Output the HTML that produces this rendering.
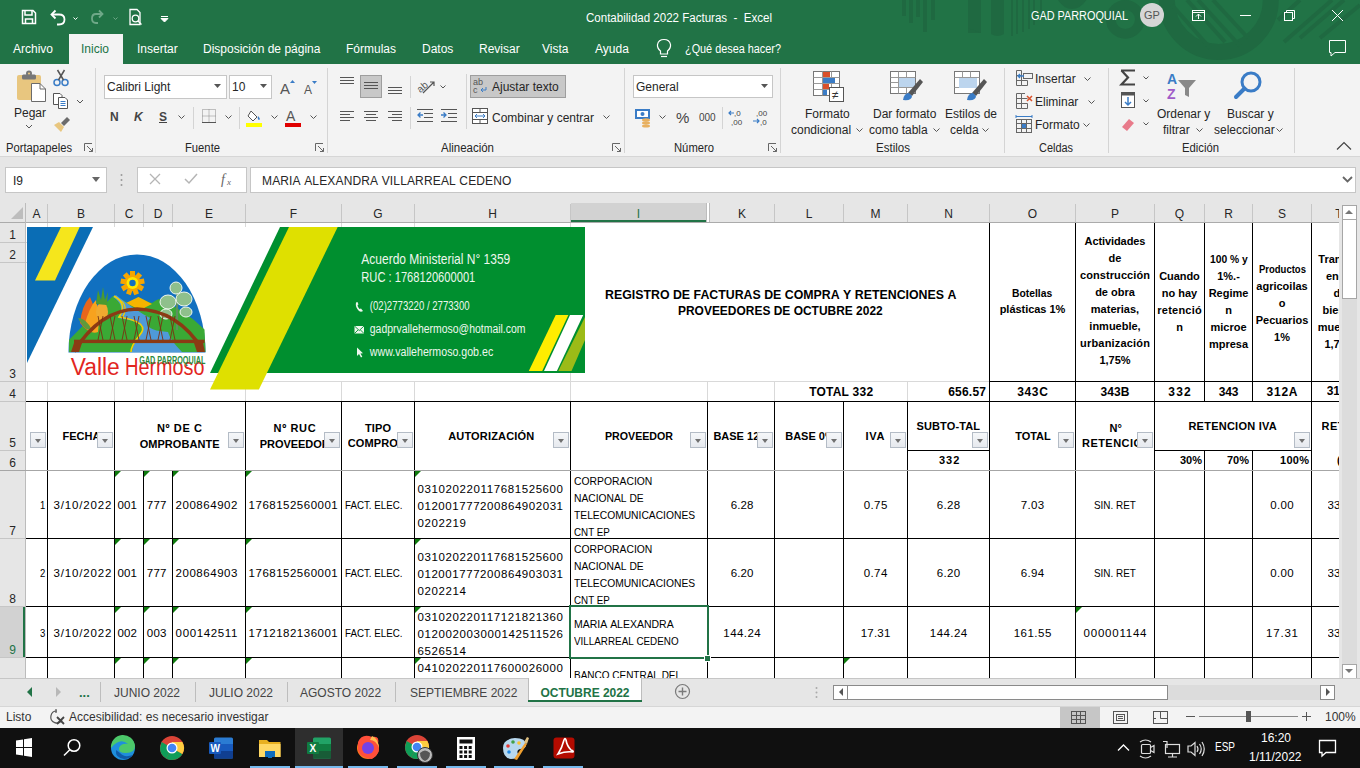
<!DOCTYPE html><html><head><meta charset="utf-8"><style>*{margin:0;padding:0;box-sizing:content-box}
html,body{width:1360px;height:768px;overflow:hidden;background:#fff;font-family:"Liberation Sans", sans-serif}
.t{position:absolute;white-space:nowrap;}
.r{position:absolute;}
.s{position:absolute;overflow:visible}
.fb{position:absolute;width:14px;height:14px;border:1px solid #b4bcc6;background:linear-gradient(#f5f7f9,#e6e9ee);}
.fb:after{content:"";position:absolute;left:4px;top:6px;border-left:3.5px solid transparent;border-right:3.5px solid transparent;border-top:4.5px solid #707070;}
</style></head><body><div class="r" style="left:0px;top:0px;width:1360px;height:64px;background:#217346;"></div>
<svg class="s" style="left:880px;top:0px;" width="480" height="64" viewBox="0 0 480 64">
<g fill="#1f6941">
<rect x="22" y="0" width="4" height="16"/><rect x="29" y="0" width="4" height="23"/><rect x="36" y="0" width="4" height="17"/><rect x="43" y="0" width="4" height="32"/><rect x="51" y="0" width="4" height="20"/>
<path d="M70 0 H88 V33 L101 33 V0 Z" />
<path d="M88 0 H101 V33 L88 28 Z"/>
<path d="M111 0 H124 V34 Q117.5 38 111 34 Z"/>
<rect x="131" y="0" width="2" height="36"/><rect x="136" y="0" width="2" height="34"/><rect x="142" y="0" width="2" height="32"/><rect x="148" y="0" width="2" height="29"/><rect x="153" y="0" width="2" height="25"/><rect x="160" y="0" width="2" height="20"/>
<path d="M178 0 H206.5 Q200 9 192 9 Q184 9 178 0Z"/>
</g>
<g fill="none" stroke="#1f6941">
<circle cx="245.3" cy="19.4" r="14.5" stroke-width="9.7"/>
<circle cx="338.8" cy="0" r="52" stroke-width="16"/>
</g>
<g stroke="#1f6941" stroke-width="4">
<path d="M307 0 L345 42"/><path d="M318 0 L360 46"/><path d="M292 5 L330 48"/><path d="M333 0 L368 38"/>
<path d="M404 42 L452 0"/><path d="M420 38 L464 0"/><path d="M398 20 L420 0"/><path d="M440 38 L480 5"/>
</g>
</svg>
<svg class="s" style="left:20px;top:8px;" width="160" height="20" viewBox="0 0 160 20">
<g fill="none" stroke="#fff" stroke-width="1.5">
<path d="M2.5 2.5 H13 L15.5 5 V15.5 H2.5 Z"/>
<path d="M5 2.5 V7 H12 V2.5"/>
<path d="M5.5 15.5 V11 H12.5 V15.5"/>
</g>
<g fill="none" stroke="#fff" stroke-width="1.8">
<path d="M32 6.5 H39 Q44.5 6.5 44.5 11.5 Q44.5 16.5 39 16.5 H37"/>
<path d="M35.5 2.5 L31.5 6.5 L35.5 10.5"/>
</g>
<path d="M53.5 9.5 L55.5 11.5 L57.5 9.5" fill="none" stroke="#fff" stroke-width="1"/>
<g fill="none" stroke="#6fa888" stroke-width="1.8">
<path d="M82 6 H76 Q72 6 72 10.5 Q72 15 76 15 H78"/>
<path d="M79 2.5 L82.5 6 L79 9.5"/>
</g>
<path d="M93.5 9.5 L95.5 11.5 L97.5 9.5" fill="none" stroke="#6fa888" stroke-width="1"/>
<g fill="none" stroke="#fff" stroke-width="1.3">
<path d="M110 1.5 H117 L120 4.5 V16.5 H110 Z"/>
<circle cx="115.5" cy="10.5" r="3.3"/><path d="M118 13 L121.5 16.5"/>
</g>
<path d="M141 8.5 H148 M141 10.5 H148 L144.5 14 Z" fill="#fff" stroke="#fff" stroke-width="1"/>
</svg>
<div class="t" style="left:586px;top:11.84px;font-size:12px;line-height:12px;color:#fff;font-weight:normal;letter-spacing:0.000px;transform:scaleX(0.9616);transform-origin:0 0;">Contabilidad&nbsp;2022&nbsp;Facturas&nbsp;&nbsp;-&nbsp;&nbsp;Excel</div>
<div class="t" style="left:1031px;top:9.84px;font-size:12px;line-height:12px;color:#fff;font-weight:normal;letter-spacing:0.000px;transform:scaleX(0.9054);transform-origin:0 0;">GAD&nbsp;PARROQUIAL</div>
<div class="r" style="left:1140px;top:3px;width:24px;height:24px;border-radius:50%;background:#d6d6d6;"></div>
<div class="t" style="left:1140px;top:9.69px;font-size:11px;line-height:11px;color:#555;font-weight:normal;width:24px;text-align:center;">GP</div>
<svg class="s" style="left:1186px;top:6px;" width="170" height="60" viewBox="0 0 170 60">
<g fill="none" stroke="#fff" stroke-width="1">
<rect x="6.5" y="4.5" width="12" height="10"/><path d="M6.5 6.5 H18.5"/><path d="M12.5 13 V8 M10 10.5 L12.5 8 L15 10.5"/>
<path d="M54 9.5 H65"/>
<rect x="98.5" y="6.5" width="8" height="8"/><path d="M100.5 6.5 V4.5 H108.5 V12.5 H106.5"/>
<path d="M146 4 L157 15 M157 4 L146 15"/>
<path d="M143.5 34.5 H159.5 V46.5 H149 L145 50 V46.5 H143.5 Z"/>
</g></svg>
<div class="r" style="left:69px;top:34px;width:54px;height:30px;background:#f3f3f3;"></div>
<div class="t" style="left:685px;top:42.84px;font-size:12px;line-height:12px;color:#fff;font-weight:normal;letter-spacing:0.000px;transform:scaleX(0.9051);transform-origin:0 0;">¿Qué&nbsp;desea&nbsp;hacer?</div>
<div class="t" style="left:13px;top:42.84px;font-size:12px;line-height:12px;color:#fff;font-weight:normal;">Archivo</div>
<div class="t" style="left:81px;top:42.84px;font-size:12px;line-height:12px;color:#217346;font-weight:normal;">Inicio</div>
<div class="t" style="left:137px;top:42.84px;font-size:12px;line-height:12px;color:#fff;font-weight:normal;">Insertar</div>
<div class="t" style="left:203px;top:42.84px;font-size:12px;line-height:12px;color:#fff;font-weight:normal;">Disposición de página</div>
<div class="t" style="left:346px;top:42.84px;font-size:12px;line-height:12px;color:#fff;font-weight:normal;">Fórmulas</div>
<div class="t" style="left:422px;top:42.84px;font-size:12px;line-height:12px;color:#fff;font-weight:normal;">Datos</div>
<div class="t" style="left:479px;top:42.84px;font-size:12px;line-height:12px;color:#fff;font-weight:normal;">Revisar</div>
<div class="t" style="left:542px;top:42.84px;font-size:12px;line-height:12px;color:#fff;font-weight:normal;">Vista</div>
<div class="t" style="left:595px;top:42.84px;font-size:12px;line-height:12px;color:#fff;font-weight:normal;">Ayuda</div>
<svg class="s" style="left:656px;top:38px;" width="16" height="22" viewBox="0 0 16 22"><g fill="none" stroke="#fff" stroke-width="1.2">
<path d="M4.5 13 Q1 10 1.5 6.5 Q2.5 1.5 8 1.5 Q13.5 1.5 14.5 6.5 Q15 10 11.5 13 V16 H4.5 Z"/><path d="M5 18.5 H11"/></g></svg>
<div class="r" style="left:0px;top:64px;width:1360px;height:92px;background:#f3f3f3;"></div>
<div class="r" style="left:0px;top:156px;width:1360px;height:1px;background:#d6d6d6;"></div>
<div class="r" style="left:95px;top:68px;width:1px;height:85px;background:#d4d4d4;"></div>
<div class="r" style="left:327px;top:68px;width:1px;height:85px;background:#d4d4d4;"></div>
<div class="r" style="left:624px;top:68px;width:1px;height:85px;background:#d4d4d4;"></div>
<div class="r" style="left:780px;top:68px;width:1px;height:85px;background:#d4d4d4;"></div>
<div class="r" style="left:1004px;top:68px;width:1px;height:85px;background:#d4d4d4;"></div>
<div class="r" style="left:1108px;top:68px;width:1px;height:85px;background:#d4d4d4;"></div>
<div class="r" style="left:1294px;top:68px;width:1px;height:85px;background:#d4d4d4;"></div>
<div class="t" style="left:6px;top:141.84px;font-size:12px;line-height:12px;color:#262626;font-weight:normal;letter-spacing:0.000px;transform:scaleX(0.9333);transform-origin:0 0;">Portapapeles</div>
<div class="t" style="left:185px;top:141.84px;font-size:12px;line-height:12px;color:#262626;font-weight:normal;letter-spacing:0.000px;transform:scaleX(0.9369);transform-origin:0 0;">Fuente</div>
<div class="t" style="left:441px;top:141.84px;font-size:12px;line-height:12px;color:#262626;font-weight:normal;letter-spacing:0.000px;transform:scaleX(0.9572);transform-origin:0 0;">Alineación</div>
<div class="t" style="left:674px;top:141.84px;font-size:12px;line-height:12px;color:#262626;font-weight:normal;letter-spacing:0.000px;transform:scaleX(0.9372);transform-origin:0 0;">Número</div>
<div class="t" style="left:876px;top:141.84px;font-size:12px;line-height:12px;color:#262626;font-weight:normal;letter-spacing:0.000px;transform:scaleX(0.9620);transform-origin:0 0;">Estilos</div>
<div class="t" style="left:1039px;top:141.84px;font-size:12px;line-height:12px;color:#262626;font-weight:normal;letter-spacing:0.000px;transform:scaleX(0.9103);transform-origin:0 0;">Celdas</div>
<div class="t" style="left:1182px;top:141.84px;font-size:12px;line-height:12px;color:#262626;font-weight:normal;letter-spacing:0.000px;transform:scaleX(0.9401);transform-origin:0 0;">Edición</div>
<svg class="s" style="left:84px;top:143px;" width="10" height="10" viewBox="0 0 10 10"><g fill="none" stroke="#666" stroke-width="1"><path d="M0.5 8 V0.5 H8"/><path d="M3 3 L8.5 8.5 M8.5 5 V8.5 H5"/></g></svg>
<svg class="s" style="left:315px;top:143px;" width="10" height="10" viewBox="0 0 10 10"><g fill="none" stroke="#666" stroke-width="1"><path d="M0.5 8 V0.5 H8"/><path d="M3 3 L8.5 8.5 M8.5 5 V8.5 H5"/></g></svg>
<svg class="s" style="left:612px;top:143px;" width="10" height="10" viewBox="0 0 10 10"><g fill="none" stroke="#666" stroke-width="1"><path d="M0.5 8 V0.5 H8"/><path d="M3 3 L8.5 8.5 M8.5 5 V8.5 H5"/></g></svg>
<svg class="s" style="left:768px;top:143px;" width="10" height="10" viewBox="0 0 10 10"><g fill="none" stroke="#666" stroke-width="1"><path d="M0.5 8 V0.5 H8"/><path d="M3 3 L8.5 8.5 M8.5 5 V8.5 H5"/></g></svg>
<svg class="s" style="left:1336px;top:141px;" width="16" height="10" viewBox="0 0 16 10"><path d="M1 8.5 L8 1.5 L15 8.5" fill="none" stroke="#444" stroke-width="1.2"/></svg>
<svg class="s" style="left:14px;top:68px;" width="36" height="36" viewBox="0 0 36 36">
<rect x="3" y="7" width="24" height="25" rx="2" fill="#e8c67f"/>
<rect x="8" y="6.5" width="14" height="5" rx="1.5" fill="#777"/>
<circle cx="15" cy="5.5" r="3" fill="#777"/><circle cx="15" cy="5.5" r="1.1" fill="#e8c67f"/>
<path d="M17.5 15.5 H26 L31.5 21 V33.5 H17.5 Z" fill="#fff" stroke="#6b6b6b" stroke-width="1"/>
<path d="M26 15.5 V21 H31.5" fill="none" stroke="#6b6b6b" stroke-width="1"/>
</svg>
<div class="t" style="left:14px;top:106.84px;font-size:12px;line-height:12px;color:#262626;font-weight:normal;">Pegar</div>
<svg class="s" style="left:25px;top:124px;" width="10" height="6" viewBox="0 0 10 6"><path d="M1 1 L4 4 L7 1" fill="none" stroke="#555" stroke-width="1"/></svg>
<svg class="s" style="left:52px;top:69px;" width="18" height="18" viewBox="0 0 18 18"><g fill="none" stroke="#3a7cc6" stroke-width="1.5"><circle cx="5" cy="13.5" r="3"/><circle cx="13" cy="13.5" r="3"/></g>
<path d="M6.5 11 L12.5 1 M11.5 11 L5.5 1" stroke="#555" stroke-width="1.5"/></svg>
<svg class="s" style="left:52px;top:92px;" width="18" height="18" viewBox="0 0 18 18"><g fill="#fff" stroke="#555" stroke-width="1"><path d="M1.5 1.5 H8 L10 3.5 V12.5 H1.5 Z"/><path d="M6.5 5.5 H13 L15.5 8 V16.5 H6.5 Z"/></g>
<g stroke="#3a7cc6" stroke-width="1"><path d="M8.5 9.5 H13.5 M8.5 11.5 H13.5 M8.5 13.5 H13.5"/></g></svg>
<svg class="s" style="left:76px;top:99px;" width="10" height="6" viewBox="0 0 10 6"><path d="M1 1 L4 4 L7 1" fill="none" stroke="#555" stroke-width="1"/></svg>
<svg class="s" style="left:52px;top:115px;" width="20" height="18" viewBox="0 0 20 18"><path d="M2 10 L9 17 L12 12 L7 7 Z" fill="#e8c67f"/><path d="M9 8 L15 2 L18 5 L12 11 Z" fill="#6b6b6b"/></svg>
<div class="r" style="left:104px;top:75px;width:121px;height:22px;background:#fff;border:1px solid #c6c6c6;"></div>
<div class="t" style="left:107px;top:80.84px;font-size:12px;line-height:12px;color:#262626;font-weight:normal;">Calibri Light</div>
<svg class="s" style="left:214px;top:84px;" width="8" height="5" viewBox="0 0 8 5"><path d="M0 0 H7 L3.5 4Z" fill="#555"/></svg>
<div class="r" style="left:229px;top:75px;width:41px;height:22px;background:#fff;border:1px solid #c6c6c6;"></div>
<div class="t" style="left:232px;top:80.84px;font-size:12px;line-height:12px;color:#262626;font-weight:normal;">10</div>
<svg class="s" style="left:260px;top:84px;" width="8" height="5" viewBox="0 0 8 5"><path d="M0 0 H7 L3.5 4Z" fill="#555"/></svg>
<svg class="s" style="left:278px;top:78px;" width="40" height="18" viewBox="0 0 40 18"><text x="2" y="16" font-family="Liberation Sans" font-size="15" fill="#555">A</text>
<path d="M12 5 L14.5 2 L17 5Z" fill="#3a7cc6"/>
<text x="26" y="16" font-family="Liberation Sans" font-size="12" fill="#555">A</text>
<path d="M34 3 L36.5 6 L39 3Z" fill="#3a7cc6"/></svg>
<div class="t" style="left:110px;top:110.84px;font-size:12px;line-height:12px;color:#444;font-weight:bold;">N</div>
<div class="t" style="left:134px;top:110.84px;font-size:12px;line-height:12px;color:#444;font-weight:bold;"><i>K</i></div>
<div class="t" style="left:159px;top:110.84px;font-size:12px;line-height:12px;color:#444;font-weight:bold;"><u>S</u></div>
<svg class="s" style="left:178px;top:115px;" width="8" height="5" viewBox="0 0 8 5"><path d="M0.5 0.5 L3.5 3.5 L6.5 0.5" fill="none" stroke="#555" stroke-width="1"/></svg>
<svg class="s" style="left:225px;top:115px;" width="8" height="5" viewBox="0 0 8 5"><path d="M0.5 0.5 L3.5 3.5 L6.5 0.5" fill="none" stroke="#555" stroke-width="1"/></svg>
<svg class="s" style="left:271px;top:115px;" width="8" height="5" viewBox="0 0 8 5"><path d="M0.5 0.5 L3.5 3.5 L6.5 0.5" fill="none" stroke="#555" stroke-width="1"/></svg>
<svg class="s" style="left:310px;top:115px;" width="8" height="5" viewBox="0 0 8 5"><path d="M0.5 0.5 L3.5 3.5 L6.5 0.5" fill="none" stroke="#555" stroke-width="1"/></svg>
<div class="r" style="left:193px;top:107px;width:1px;height:22px;background:#d4d4d4;"></div>
<div class="r" style="left:239px;top:107px;width:1px;height:22px;background:#d4d4d4;"></div>
<svg class="s" style="left:202px;top:109px;" width="15" height="15" viewBox="0 0 15 15"><g fill="none" stroke="#888" stroke-width="1" stroke-dasharray="1 1"><rect x="0.5" y="0.5" width="13" height="13"/><path d="M7 0.5 V13.5 M0.5 7 H13.5"/></g><path d="M0 13.5 H14" stroke="#555"/></svg>
<svg class="s" style="left:246px;top:108px;" width="20" height="20" viewBox="0 0 20 20"><path d="M5 3 L11 9 L7 13 L2 8 Z" fill="#fff" stroke="#555" stroke-width="1"/><path d="M12 8 Q15 11 13 12 Q11 11 12 8" fill="#3a7cc6"/>
<rect x="0" y="15" width="16" height="4" fill="#ffff00"/></svg>
<svg class="s" style="left:284px;top:108px;" width="20" height="20" viewBox="0 0 20 20"><text x="2" y="13" font-family="Liberation Sans" font-size="14" fill="#555">A</text><rect x="1" y="15" width="16" height="4" fill="#e00000"/></svg>
<svg class="s" style="left:340px;top:77px;" width="20" height="10" viewBox="0 0 20 10"><rect x="0" y="0" width="14" height="1" fill="#555"/><rect x="0" y="3" width="14" height="1" fill="#555"/><rect x="0" y="6" width="14" height="1" fill="#555"/></svg>
<div class="r" style="left:360px;top:75px;width:20px;height:21px;background:#c8c8c8;border:1px solid #9e9e9e;"></div>
<svg class="s" style="left:364px;top:82px;" width="20" height="10" viewBox="0 0 20 10"><rect x="0" y="0" width="14" height="1" fill="#555"/><rect x="0" y="3" width="14" height="1" fill="#555"/><rect x="0" y="6" width="14" height="1" fill="#555"/></svg>
<svg class="s" style="left:388px;top:87px;" width="20" height="10" viewBox="0 0 20 10"><rect x="0" y="0" width="14" height="1" fill="#555"/><rect x="0" y="3" width="14" height="1" fill="#555"/><rect x="0" y="6" width="14" height="1" fill="#555"/></svg>
<div class="r" style="left:410px;top:76px;width:1px;height:22px;background:#d4d4d4;"></div>
<svg class="s" style="left:417px;top:77px;" width="30" height="18" viewBox="0 0 30 18"><text x="0" y="13" font-family="Liberation Sans" font-size="10" fill="#555" transform="rotate(-40 6 10)">ab</text><path d="M6 16 L17 5 M13 5 H17 V9" fill="none" stroke="#555" stroke-width="1.2"/>
<path d="M23.5 8.5 L26 11 L28.5 8.5" fill="none" stroke="#555" stroke-width="1"/></svg>
<svg class="s" style="left:340px;top:111px;" width="20" height="13" viewBox="0 0 20 13"><rect x="0" y="0" width="14" height="1" fill="#555"/><rect x="0" y="3" width="10" height="1" fill="#555"/><rect x="0" y="6" width="14" height="1" fill="#555"/><rect x="0" y="9" width="10" height="1" fill="#555"/></svg>
<svg class="s" style="left:364px;top:111px;" width="20" height="13" viewBox="0 0 20 13"><rect x="0" y="0" width="14" height="1" fill="#555"/><rect x="2" y="3" width="10" height="1" fill="#555"/><rect x="0" y="6" width="14" height="1" fill="#555"/><rect x="2" y="9" width="10" height="1" fill="#555"/></svg>
<svg class="s" style="left:388px;top:111px;" width="20" height="13" viewBox="0 0 20 13"><rect x="0" y="0" width="14" height="1" fill="#555"/><rect x="4" y="3" width="10" height="1" fill="#555"/><rect x="0" y="6" width="14" height="1" fill="#555"/><rect x="4" y="9" width="10" height="1" fill="#555"/></svg>
<div class="r" style="left:410px;top:107px;width:1px;height:22px;background:#d4d4d4;"></div>
<svg class="s" style="left:417px;top:109px;" width="44" height="16" viewBox="0 0 44 16"><g fill="#555"><rect x="0" y="0" width="16" height="1"/><rect x="7" y="4" width="9" height="1"/><rect x="7" y="8" width="9" height="1"/><rect x="0" y="12" width="16" height="1"/>
<rect x="24" y="0" width="16" height="1"/><rect x="31" y="4" width="9" height="1"/><rect x="31" y="8" width="9" height="1"/><rect x="24" y="12" width="16" height="1"/></g>
<g fill="none" stroke="#3a7cc6" stroke-width="1.3"><path d="M1 6 H6 M3.5 3.5 L1 6 L3.5 8.5"/><path d="M24 6 H29 M26.5 3.5 L29 6 L26.5 8.5"/></g></svg>
<div class="r" style="left:466px;top:74px;width:1px;height:55px;background:#d4d4d4;"></div>
<div class="r" style="left:470px;top:75px;width:94px;height:21px;background:#c8c8c8;border:1px solid #9e9e9e;"></div>
<svg class="s" style="left:473px;top:77px;" width="18" height="18" viewBox="0 0 18 18"><text x="0" y="8" font-family="Liberation Sans" font-size="9" fill="#555">ab</text><text x="0" y="16" font-family="Liberation Sans" font-size="9" fill="#555">c</text>
<path d="M13 10 V13 H8 M10 11 L8 13 L10 15" fill="none" stroke="#3a7cc6" stroke-width="1"/></svg>
<div class="t" style="left:492px;top:80.84px;font-size:12px;line-height:12px;color:#262626;font-weight:normal;">Ajustar texto</div>
<svg class="s" style="left:472px;top:108px;" width="18" height="18" viewBox="0 0 18 18"><rect x="0.5" y="0.5" width="15" height="15" fill="#fff" stroke="#555"/><path d="M0.5 4.5 H15.5 M0.5 11.5 H15.5 M8 0.5 V4.5 M8 11.5 V15.5" stroke="#555" fill="none"/>
<path d="M3 8 H13 M5 6 L3 8 L5 10 M11 6 L13 8 L11 10" stroke="#3a7cc6" fill="none"/></svg>
<div class="t" style="left:492px;top:111.84px;font-size:12px;line-height:12px;color:#262626;font-weight:normal;">Combinar y centrar</div>
<svg class="s" style="left:603px;top:115px;" width="8" height="5" viewBox="0 0 8 5"><path d="M0.5 0.5 L3.5 3.5 L6.5 0.5" fill="none" stroke="#555" stroke-width="1"/></svg>
<div class="r" style="left:633px;top:75px;width:138px;height:21px;background:#fff;border:1px solid #c6c6c6;"></div>
<div class="t" style="left:636px;top:80.84px;font-size:12px;line-height:12px;color:#262626;font-weight:normal;">General</div>
<svg class="s" style="left:761px;top:84px;" width="8" height="5" viewBox="0 0 8 5"><path d="M0 0 H7 L3.5 4Z" fill="#555"/></svg>
<svg class="s" style="left:634px;top:107px;" width="22" height="20" viewBox="0 0 22 20"><rect x="1" y="2" width="15" height="10" fill="#3a7cc6"/><rect x="3" y="4" width="11" height="6" fill="#fff"/><circle cx="8.5" cy="7" r="2" fill="#3a7cc6"/>
<ellipse cx="12" cy="13" rx="4" ry="1.7" fill="#e8b060"/><ellipse cx="12" cy="16" rx="4" ry="1.7" fill="#e8b060"/><ellipse cx="12" cy="19" rx="4" ry="1.5" fill="#e8b060"/></svg>
<svg class="s" style="left:659px;top:115px;" width="8" height="5" viewBox="0 0 8 5"><path d="M0.5 0.5 L3.5 3.5 L6.5 0.5" fill="none" stroke="#555" stroke-width="1"/></svg>
<div class="t" style="left:676px;top:110.30px;font-size:15px;line-height:15px;color:#444;font-weight:normal;">%</div>
<div class="t" style="left:699px;top:112.53px;font-size:10px;line-height:10px;color:#444;font-weight:normal;">000</div>
<div class="r" style="left:722px;top:107px;width:1px;height:22px;background:#d4d4d4;"></div>
<svg class="s" style="left:728px;top:107px;" width="44" height="20" viewBox="0 0 44 20"><text x="6" y="9" font-family="Liberation Sans" font-size="8" fill="#444">,0</text><text x="3" y="18" font-family="Liberation Sans" font-size="8" fill="#444">,00</text>
<path d="M1 6 H6 M3 4 L1 6 L3 8" fill="none" stroke="#3a7cc6" stroke-width="1.2"/>
<text x="28" y="9" font-family="Liberation Sans" font-size="8" fill="#444">,00</text><text x="32" y="18" font-family="Liberation Sans" font-size="8" fill="#444">,0</text>
<path d="M25 14 H31 M29 12 L31 14 L29 16" fill="none" stroke="#3a7cc6" stroke-width="1.2"/></svg>
<svg class="s" style="left:813px;top:71px;" width="32" height="32" viewBox="0 0 32 32"><rect x="0.5" y="0.5" width="26" height="24" fill="#fff" stroke="#777"/>
<g stroke="#999"><path d="M0.5 6.5 H26.5 M0.5 12.5 H26.5 M0.5 18.5 H26.5 M9.5 0.5 V24.5 M18.5 0.5 V24.5"/></g>
<rect x="10" y="1" width="7" height="5" fill="#d9502b"/><rect x="10" y="7" width="12" height="5" fill="#3a7cc6"/><rect x="10" y="13" width="6" height="5" fill="#d9502b"/><rect x="10" y="19" width="4" height="5" fill="#3a7cc6"/>
<rect x="16.5" y="16.5" width="14" height="14" fill="#fff" stroke="#555"/><text x="19" y="28" font-family="Liberation Sans" font-size="12" fill="#333">≠</text></svg>
<div class="t" style="left:805px;top:107.84px;font-size:12px;line-height:12px;color:#262626;font-weight:normal;">Formato</div>
<div class="t" style="left:791px;top:123.84px;font-size:12px;line-height:12px;color:#262626;font-weight:normal;">condicional</div>
<svg class="s" style="left:856px;top:128px;" width="8" height="5" viewBox="0 0 8 5"><path d="M0.5 0.5 L3.5 3.5 L6.5 0.5" fill="none" stroke="#555" stroke-width="1"/></svg>
<svg class="s" style="left:890px;top:71px;" width="34" height="32" viewBox="0 0 34 32"><rect x="0.5" y="0.5" width="25" height="22" fill="#fff" stroke="#777"/>
<g stroke="#999"><path d="M0.5 6.5 H25.5 M0.5 11.5 H25.5 M0.5 16.5 H25.5 M8.5 0.5 V22.5 M16.5 0.5 V22.5"/></g>
<rect x="9" y="7" width="16" height="9" fill="#bcd5ee"/>
<path d="M18 22 L30 8 L33 11 L22 25 Z" fill="#555"/><path d="M13 29 Q14 22 19 22 L22 25 Q22 30 13 29Z" fill="#3a7cc6"/></svg>
<div class="t" style="left:873px;top:107.84px;font-size:12px;line-height:12px;color:#262626;font-weight:normal;">Dar formato</div>
<div class="t" style="left:869px;top:123.84px;font-size:12px;line-height:12px;color:#262626;font-weight:normal;">como tabla</div>
<svg class="s" style="left:933px;top:128px;" width="8" height="5" viewBox="0 0 8 5"><path d="M0.5 0.5 L3.5 3.5 L6.5 0.5" fill="none" stroke="#555" stroke-width="1"/></svg>
<svg class="s" style="left:954px;top:71px;" width="34" height="32" viewBox="0 0 34 32"><rect x="0.5" y="0.5" width="25" height="22" fill="#fff" stroke="#777"/>
<g stroke="#999"><path d="M0.5 6.5 H25.5 M8.5 0.5 V6.5 M16.5 0.5 V6.5 M0.5 16.5 H5"/></g>
<rect x="5" y="7" width="18" height="10" fill="#bcd5ee"/>
<path d="M18 22 L30 8 L33 11 L22 25 Z" fill="#555"/><path d="M13 29 Q14 22 19 22 L22 25 Q22 30 13 29Z" fill="#3a7cc6"/></svg>
<div class="t" style="left:945px;top:107.84px;font-size:12px;line-height:12px;color:#262626;font-weight:normal;">Estilos de</div>
<div class="t" style="left:950px;top:123.84px;font-size:12px;line-height:12px;color:#262626;font-weight:normal;">celda</div>
<svg class="s" style="left:982px;top:128px;" width="8" height="5" viewBox="0 0 8 5"><path d="M0.5 0.5 L3.5 3.5 L6.5 0.5" fill="none" stroke="#555" stroke-width="1"/></svg>
<svg class="s" style="left:1015px;top:69px;" width="20" height="66" viewBox="0 0 20 66"><g fill="none" stroke="#666" stroke-width="1">
<path d="M1.5 1.5 H6.5 V16.5 H1.5 Z M1.5 6.5 H6.5 M1.5 11.5 H6.5 M6.5 11.5 H12.5 V16.5 H6.5"/>
<rect x="8.5" y="4.5" width="9" height="5"/>
<path d="M1.5 24.5 H6.5 V39.5 H1.5 Z M1.5 29.5 H12.5 M1.5 34.5 H12.5 V39.5 H6.5 M6.5 24.5 H10"/>
<rect x="1.5" y="50.5" width="15" height="13"/><path d="M1.5 54.5 H16.5 M1.5 59.5 H16.5 M6.5 50.5 V63.5 M11.5 50.5 V63.5"/>
</g>
<path d="M3 7 H9 M5 5 L3 7 L5 9" stroke="#3a7cc6" fill="none" stroke-width="1.3"/>
<path d="M12 27 L17 32 M17 27 L12 32" stroke="#d9502b" stroke-width="1.5"/>
<path d="M1 47.5 H17 M1 46 V49 M17 46 V49" stroke="#3a7cc6" stroke-width="1"/>
<rect x="7" y="55" width="4" height="4" fill="#3a7cc6"/></svg>
<div class="t" style="left:1035px;top:72.84px;font-size:12px;line-height:12px;color:#262626;font-weight:normal;">Insertar</div>
<div class="t" style="left:1035px;top:95.84px;font-size:12px;line-height:12px;color:#262626;font-weight:normal;">Eliminar</div>
<div class="t" style="left:1035px;top:118.84px;font-size:12px;line-height:12px;color:#262626;font-weight:normal;">Formato</div>
<svg class="s" style="left:1084px;top:77px;" width="8" height="5" viewBox="0 0 8 5"><path d="M0.5 0.5 L3.5 3.5 L6.5 0.5" fill="none" stroke="#555" stroke-width="1"/></svg>
<svg class="s" style="left:1088px;top:100px;" width="8" height="5" viewBox="0 0 8 5"><path d="M0.5 0.5 L3.5 3.5 L6.5 0.5" fill="none" stroke="#555" stroke-width="1"/></svg>
<svg class="s" style="left:1083px;top:123px;" width="8" height="5" viewBox="0 0 8 5"><path d="M0.5 0.5 L3.5 3.5 L6.5 0.5" fill="none" stroke="#555" stroke-width="1"/></svg>
<svg class="s" style="left:1118px;top:68px;" width="36" height="66" viewBox="0 0 36 66"><path d="M3 2.5 H17 M3.5 2.5 L10 9.5 L3.5 16.5 H17" fill="none" stroke="#444" stroke-width="2.2"/>
<rect x="3.5" y="24.5" width="13" height="15" fill="#fff" stroke="#555"/><rect x="3.5" y="24.5" width="13" height="3" fill="#555"/>
<path d="M10 29 V37 M7 34 L10 37 L13 34" fill="none" stroke="#3a7cc6" stroke-width="1.5"/>
<path d="M4 59 L11 51 L16 55 L9 63 Z" fill="#e87a8a"/>
<g fill="none" stroke="#555" stroke-width="1"><path d="M25.5 8.5 L28 11 L30.5 8.5"/><path d="M25.5 31.5 L28 34 L30.5 31.5"/><path d="M25.5 54.5 L28 57 L30.5 54.5"/></g></svg>
<svg class="s" style="left:1166px;top:71px;" width="34" height="30" viewBox="0 0 34 30"><text x="1" y="13" font-family="Liberation Sans" font-size="14" font-weight="bold" fill="#3a7cc6">A</text>
<text x="1" y="28" font-family="Liberation Sans" font-size="14" font-weight="bold" fill="#a05cc8">Z</text>
<path d="M12 9 H30 L23 17 V26 L19 24 V17 Z" fill="#888"/></svg>
<div class="t" style="left:1157px;top:107.84px;font-size:12px;line-height:12px;color:#262626;font-weight:normal;">Ordenar y</div>
<div class="t" style="left:1163px;top:123.84px;font-size:12px;line-height:12px;color:#262626;font-weight:normal;">filtrar</div>
<svg class="s" style="left:1196px;top:128px;" width="8" height="5" viewBox="0 0 8 5"><path d="M0.5 0.5 L3.5 3.5 L6.5 0.5" fill="none" stroke="#555" stroke-width="1"/></svg>
<svg class="s" style="left:1232px;top:70px;" width="32" height="32" viewBox="0 0 32 32"><circle cx="19" cy="12" r="9" fill="none" stroke="#3a7cc6" stroke-width="3"/><path d="M12.5 18.5 L4 27" stroke="#3a7cc6" stroke-width="4" stroke-linecap="round"/></svg>
<div class="t" style="left:1227px;top:107.84px;font-size:12px;line-height:12px;color:#262626;font-weight:normal;">Buscar y</div>
<div class="t" style="left:1214px;top:123.84px;font-size:12px;line-height:12px;color:#262626;font-weight:normal;">seleccionar</div>
<svg class="s" style="left:1276px;top:128px;" width="8" height="5" viewBox="0 0 8 5"><path d="M0.5 0.5 L3.5 3.5 L6.5 0.5" fill="none" stroke="#555" stroke-width="1"/></svg>
<div class="r" style="left:0px;top:157px;width:1360px;height:46px;background:#e6e6e6;"></div>
<div class="r" style="left:5px;top:167px;width:100px;height:24px;background:#fff;border:1px solid #c6c6c6;"></div>
<div class="t" style="left:13px;top:174.84px;font-size:12px;line-height:12px;color:#262626;font-weight:normal;">I9</div>
<svg class="s" style="left:92px;top:177px;" width="10" height="6" viewBox="0 0 10 6"><path d="M0 0 H8 L4 5Z" fill="#666"/></svg>
<svg class="s" style="left:120px;top:173px;" width="4" height="16" viewBox="0 0 4 16"><circle cx="1.5" cy="2" r="1" fill="#999"/><circle cx="1.5" cy="7" r="1" fill="#999"/><circle cx="1.5" cy="12" r="1" fill="#999"/></svg>
<div class="r" style="left:137px;top:167px;width:108px;height:24px;background:#fff;border:1px solid #c6c6c6;"></div>
<svg class="s" style="left:148px;top:172px;" width="90" height="16" viewBox="0 0 90 16"><path d="M2 2 L12 12 M12 2 L2 12" stroke="#b5b5b5" stroke-width="1.3"/>
<path d="M37 7 L41 11 L49 2" fill="none" stroke="#b5b5b5" stroke-width="1.5"/>
<text x="73" y="12" font-family="Liberation Serif" font-style="italic" font-size="14" fill="#666">f</text><text x="79" y="13" font-family="Liberation Serif" font-style="italic" font-size="9" fill="#666">x</text></svg>
<div class="r" style="left:250px;top:167px;width:1104px;height:24px;background:#fff;border:1px solid #c6c6c6;"></div>
<div class="t" style="left:262px;top:174.84px;font-size:12px;line-height:12px;color:#262626;font-weight:normal;letter-spacing:0.146px;">MARIA&nbsp;ALEXANDRA&nbsp;VILLARREAL&nbsp;CEDENO</div>
<svg class="s" style="left:1342px;top:176px;" width="12" height="8" viewBox="0 0 12 8"><path d="M1 1 L5.5 5.5 L10 1" fill="none" stroke="#666" stroke-width="1.8"/></svg>
<div class="r" style="left:0px;top:203px;width:1339px;height:20px;background:#e6e6e6;"></div>
<div class="r" style="left:0px;top:222px;width:1339px;height:1px;background:#ababab;"></div>
<div class="r" style="left:25px;top:203px;width:1px;height:475px;background:#bcbcbc;"></div>
<svg class="s" style="left:8px;top:206px;" width="16" height="14" viewBox="0 0 16 14"><path d="M15 1 V13 H3 Z" fill="#bdbdbd"/></svg>
<div class="r" style="left:571px;top:203px;width:135px;height:19px;background:#d2d2d2;"></div>
<div class="r" style="left:571px;top:220px;width:136px;height:2px;background:#217346;"></div>
<div class="r" style="left:47px;top:204px;width:1px;height:18px;background:#c6c6c6;"></div>
<div class="t" style="left:26px;top:207.84px;font-size:12px;line-height:12px;color:#262626;font-weight:normal;width:21px;text-align:center;">A</div>
<div class="r" style="left:114px;top:204px;width:1px;height:18px;background:#c6c6c6;"></div>
<div class="t" style="left:48px;top:207.84px;font-size:12px;line-height:12px;color:#262626;font-weight:normal;width:66px;text-align:center;">B</div>
<div class="r" style="left:143px;top:204px;width:1px;height:18px;background:#c6c6c6;"></div>
<div class="t" style="left:115px;top:207.84px;font-size:12px;line-height:12px;color:#262626;font-weight:normal;width:28px;text-align:center;">C</div>
<div class="r" style="left:172px;top:204px;width:1px;height:18px;background:#c6c6c6;"></div>
<div class="t" style="left:144px;top:207.84px;font-size:12px;line-height:12px;color:#262626;font-weight:normal;width:28px;text-align:center;">D</div>
<div class="r" style="left:245px;top:204px;width:1px;height:18px;background:#c6c6c6;"></div>
<div class="t" style="left:173px;top:207.84px;font-size:12px;line-height:12px;color:#262626;font-weight:normal;width:72px;text-align:center;">E</div>
<div class="r" style="left:341px;top:204px;width:1px;height:18px;background:#c6c6c6;"></div>
<div class="t" style="left:246px;top:207.84px;font-size:12px;line-height:12px;color:#262626;font-weight:normal;width:95px;text-align:center;">F</div>
<div class="r" style="left:414px;top:204px;width:1px;height:18px;background:#c6c6c6;"></div>
<div class="t" style="left:342px;top:207.84px;font-size:12px;line-height:12px;color:#262626;font-weight:normal;width:72px;text-align:center;">G</div>
<div class="r" style="left:570px;top:204px;width:1px;height:18px;background:#c6c6c6;"></div>
<div class="t" style="left:415px;top:207.84px;font-size:12px;line-height:12px;color:#262626;font-weight:normal;width:155px;text-align:center;">H</div>
<div class="r" style="left:706px;top:204px;width:1px;height:18px;background:#c6c6c6;"></div>
<div class="t" style="left:571px;top:207.84px;font-size:12px;line-height:12px;color:#217346;font-weight:normal;width:135px;text-align:center;">I</div>
<div class="r" style="left:774px;top:204px;width:1px;height:18px;background:#c6c6c6;"></div>
<div class="t" style="left:710px;top:207.84px;font-size:12px;line-height:12px;color:#262626;font-weight:normal;width:64px;text-align:center;">K</div>
<div class="r" style="left:843px;top:204px;width:1px;height:18px;background:#c6c6c6;"></div>
<div class="t" style="left:775px;top:207.84px;font-size:12px;line-height:12px;color:#262626;font-weight:normal;width:68px;text-align:center;">L</div>
<div class="r" style="left:907px;top:204px;width:1px;height:18px;background:#c6c6c6;"></div>
<div class="t" style="left:844px;top:207.84px;font-size:12px;line-height:12px;color:#262626;font-weight:normal;width:63px;text-align:center;">M</div>
<div class="r" style="left:989px;top:204px;width:1px;height:18px;background:#c6c6c6;"></div>
<div class="t" style="left:908px;top:207.84px;font-size:12px;line-height:12px;color:#262626;font-weight:normal;width:81px;text-align:center;">N</div>
<div class="r" style="left:1075px;top:204px;width:1px;height:18px;background:#c6c6c6;"></div>
<div class="t" style="left:990px;top:207.84px;font-size:12px;line-height:12px;color:#262626;font-weight:normal;width:85px;text-align:center;">O</div>
<div class="r" style="left:1154px;top:204px;width:1px;height:18px;background:#c6c6c6;"></div>
<div class="t" style="left:1076px;top:207.84px;font-size:12px;line-height:12px;color:#262626;font-weight:normal;width:78px;text-align:center;">P</div>
<div class="r" style="left:1204px;top:204px;width:1px;height:18px;background:#c6c6c6;"></div>
<div class="t" style="left:1155px;top:207.84px;font-size:12px;line-height:12px;color:#262626;font-weight:normal;width:49px;text-align:center;">Q</div>
<div class="r" style="left:1252px;top:204px;width:1px;height:18px;background:#c6c6c6;"></div>
<div class="t" style="left:1205px;top:207.84px;font-size:12px;line-height:12px;color:#262626;font-weight:normal;width:47px;text-align:center;">R</div>
<div class="r" style="left:1311px;top:204px;width:1px;height:18px;background:#c6c6c6;"></div>
<div class="t" style="left:1253px;top:207.84px;font-size:12px;line-height:12px;color:#262626;font-weight:normal;width:58px;text-align:center;">S</div>
<div class="t" style="left:1312px;top:207.84px;font-size:12px;line-height:12px;color:#262626;font-weight:normal;width:54px;text-align:center;">T</div>
<div class="r" style="left:706px;top:203px;width:1px;height:19px;background:#bdbdbd;"></div>
<div class="r" style="left:707px;top:203px;width:2px;height:19px;background:#fff;"></div>
<div class="r" style="left:709px;top:203px;width:1px;height:19px;background:#bdbdbd;"></div>
<div class="r" style="left:26px;top:223px;width:1313px;height:455px;background:#fff;"></div>
<div class="r" style="left:0px;top:223px;width:25px;height:455px;background:#e6e6e6;"></div>
<div class="r" style="left:0px;top:607px;width:25px;height:50px;background:#d2d2d2;"></div>
<div class="r" style="left:23px;top:607px;width:2px;height:50px;background:#217346;"></div>
<div class="r" style="left:0px;top:242px;width:25px;height:1px;background:#c6c6c6;"></div>
<div class="t" style="left:0px;top:228.84px;font-size:12px;line-height:12px;color:#262626;font-weight:normal;width:25px;text-align:center;">1</div>
<div class="r" style="left:0px;top:262px;width:25px;height:1px;background:#c6c6c6;"></div>
<div class="t" style="left:0px;top:248.84px;font-size:12px;line-height:12px;color:#262626;font-weight:normal;width:25px;text-align:center;">2</div>
<div class="r" style="left:0px;top:381px;width:25px;height:1px;background:#c6c6c6;"></div>
<div class="t" style="left:0px;top:367.84px;font-size:12px;line-height:12px;color:#262626;font-weight:normal;width:25px;text-align:center;">3</div>
<div class="r" style="left:0px;top:401px;width:25px;height:1px;background:#c6c6c6;"></div>
<div class="t" style="left:0px;top:387.84px;font-size:12px;line-height:12px;color:#262626;font-weight:normal;width:25px;text-align:center;">4</div>
<div class="r" style="left:0px;top:450px;width:25px;height:1px;background:#c6c6c6;"></div>
<div class="t" style="left:0px;top:436.84px;font-size:12px;line-height:12px;color:#262626;font-weight:normal;width:25px;text-align:center;">5</div>
<div class="r" style="left:0px;top:470px;width:25px;height:1px;background:#c6c6c6;"></div>
<div class="t" style="left:0px;top:456.84px;font-size:12px;line-height:12px;color:#262626;font-weight:normal;width:25px;text-align:center;">6</div>
<div class="r" style="left:0px;top:538px;width:25px;height:1px;background:#c6c6c6;"></div>
<div class="t" style="left:0px;top:524.84px;font-size:12px;line-height:12px;color:#262626;font-weight:normal;width:25px;text-align:center;">7</div>
<div class="r" style="left:0px;top:606px;width:25px;height:1px;background:#c6c6c6;"></div>
<div class="t" style="left:0px;top:592.84px;font-size:12px;line-height:12px;color:#262626;font-weight:normal;width:25px;text-align:center;">8</div>
<div class="r" style="left:0px;top:657px;width:25px;height:1px;background:#c6c6c6;"></div>
<div class="t" style="left:0px;top:643.84px;font-size:12px;line-height:12px;color:#217346;font-weight:normal;width:25px;text-align:center;">9</div>
<div class="r" style="left:47px;top:223px;width:1px;height:178px;background:#d9d9d9;"></div>
<div class="r" style="left:114px;top:223px;width:1px;height:178px;background:#d9d9d9;"></div>
<div class="r" style="left:143px;top:223px;width:1px;height:178px;background:#d9d9d9;"></div>
<div class="r" style="left:172px;top:223px;width:1px;height:178px;background:#d9d9d9;"></div>
<div class="r" style="left:245px;top:223px;width:1px;height:178px;background:#d9d9d9;"></div>
<div class="r" style="left:341px;top:223px;width:1px;height:178px;background:#d9d9d9;"></div>
<div class="r" style="left:414px;top:223px;width:1px;height:178px;background:#d9d9d9;"></div>
<div class="r" style="left:570px;top:223px;width:1px;height:178px;background:#d9d9d9;"></div>
<div class="r" style="left:707px;top:382px;width:1px;height:19px;background:#d9d9d9;"></div>
<div class="r" style="left:774px;top:382px;width:1px;height:19px;background:#d9d9d9;"></div>
<div class="r" style="left:907px;top:382px;width:1px;height:19px;background:#d9d9d9;"></div>
<div class="r" style="left:26px;top:242px;width:545px;height:1px;background:#d9d9d9;"></div>
<div class="r" style="left:26px;top:262px;width:545px;height:1px;background:#d9d9d9;"></div>
<div class="r" style="left:26px;top:381px;width:963px;height:1px;background:#d9d9d9;"></div>
<div class="r" style="left:989px;top:223px;width:1px;height:455px;background:#000;"></div>
<div class="r" style="left:989px;top:381px;width:350px;height:1px;background:#000;"></div>
<div class="r" style="left:1075px;top:223px;width:1px;height:455px;background:#000;"></div>
<div class="r" style="left:1154px;top:223px;width:1px;height:455px;background:#000;"></div>
<div class="r" style="left:1311px;top:223px;width:1px;height:455px;background:#000;"></div>
<div class="r" style="left:1204px;top:223px;width:1px;height:179px;background:#000;"></div>
<div class="r" style="left:1204px;top:450px;width:1px;height:228px;background:#000;"></div>
<div class="r" style="left:1252px;top:223px;width:1px;height:179px;background:#000;"></div>
<div class="r" style="left:1252px;top:450px;width:1px;height:228px;background:#000;"></div>
<div class="r" style="left:26px;top:401px;width:1313px;height:1px;background:#000;"></div>
<div class="r" style="left:47px;top:401px;width:1px;height:277px;background:#000;"></div>
<div class="r" style="left:114px;top:401px;width:1px;height:277px;background:#000;"></div>
<div class="r" style="left:245px;top:401px;width:1px;height:277px;background:#000;"></div>
<div class="r" style="left:341px;top:401px;width:1px;height:277px;background:#000;"></div>
<div class="r" style="left:414px;top:401px;width:1px;height:277px;background:#000;"></div>
<div class="r" style="left:570px;top:401px;width:1px;height:277px;background:#000;"></div>
<div class="r" style="left:707px;top:401px;width:1px;height:277px;background:#000;"></div>
<div class="r" style="left:774px;top:401px;width:1px;height:277px;background:#000;"></div>
<div class="r" style="left:843px;top:401px;width:1px;height:277px;background:#000;"></div>
<div class="r" style="left:907px;top:401px;width:1px;height:277px;background:#000;"></div>
<div class="r" style="left:143px;top:470px;width:1px;height:208px;background:#000;"></div>
<div class="r" style="left:172px;top:470px;width:1px;height:208px;background:#000;"></div>
<div class="r" style="left:907px;top:450px;width:82px;height:1px;background:#000;"></div>
<div class="r" style="left:1154px;top:450px;width:157px;height:1px;background:#000;"></div>
<div class="r" style="left:0px;top:470px;width:1339px;height:1px;background:#a6a6a6;"></div>
<div class="r" style="left:26px;top:538px;width:1313px;height:1px;background:#000;"></div>
<div class="r" style="left:26px;top:606px;width:1313px;height:1px;background:#000;"></div>
<div class="r" style="left:26px;top:657px;width:1313px;height:1px;background:#000;"></div>
<svg class="s" style="left:0;top:0" width="1360" height="768" viewBox="0 0 1360 768"><rect x="27" y="227" width="542" height="154" fill="#fff"/><path d="M27 227 H93 L27 363 Z" fill="#0a6db5"/><path d="M61 227 H79.7 L55 280.4 H35 Z" fill="#f5e61c"/><path d="M280 227 H585 V373 H210 Z" fill="#008f2f"/><path d="M289 227 H337.7 L258.9 389.6 H210 Z" fill="#dfe000"/><path d="M555.7 315 H568.4 L542.2 371 H528.8 Z" fill="#ffed00"/><path d="M570 315 H583.2 L556.9 371 H544 Z" fill="#fff"/><path d="M585 317 V340 L571.5 371 H558.3 Z" fill="#9cbb17"/><text x="361.3" y="263.6" font-size="14.5" font-family="Liberation Sans" fill="#eef7ee" textLength="149" lengthAdjust="spacingAndGlyphs">Acuerdo Ministerial N° 1359</text><text x="361.3" y="281.5" font-size="14.5" font-family="Liberation Sans" fill="#eef7ee" textLength="114" lengthAdjust="spacingAndGlyphs">RUC : 1768120600001</text><text x="369.8" y="310.4" font-size="12" font-family="Liberation Sans" fill="#eef7ee" textLength="99.8" lengthAdjust="spacingAndGlyphs">(02)2773220 / 2773300</text><text x="369.8" y="333.2" font-size="12" font-family="Liberation Sans" fill="#eef7ee" textLength="155.7" lengthAdjust="spacingAndGlyphs">gadprvallehermoso@hotmail.com</text><text x="369.8" y="355.6" font-size="12" font-family="Liberation Sans" fill="#eef7ee" textLength="123.4" lengthAdjust="spacingAndGlyphs">www.vallehermoso.gob.ec</text><path d="M356 302.5 Q355 307 359 311 Q361 312.5 363 311 L361 308.5 L359.5 309 Q357.5 307 357.5 305 L358.5 304.5 L357.5 302 Z" fill="#eef7ee"/><rect x="354.5" y="326" width="9.5" height="7.5" fill="#eef7ee"/><path d="M354.5 326 L359.25 330.5 L364 326 M354.5 333.5 L358 330 M364 333.5 L360.5 330" stroke="#008f2f" stroke-width="0.9" fill="none"/><path d="M357 347.5 V356 L359 354 L361 357.5 L362.3 356.8 L360.5 353.5 L363 353.3 Z" fill="#eef7ee"/><path d="M68.5 352.4 A68.5 98 0 0 1 205.5 352.4 Z" fill="#1170c0"/><path d="M69 352 L69 340 Q90 318 113 296 Q124 300 130 304 L138 297 Q145 301 152 303 Q156 300 159 299 Q185 310 204.5 329.5 L205.5 352 Z" fill="#3aa935"/><path d="M126 303 L138.5 297 L152 304 L140 310 Z" fill="#f5b400"/><path d="M113 297 Q126 305 118 318 Q150 322 140 335 Q132 345 132 352 H182 Q170 340 168 332 Q140 330 150 318 Q135 310 116 295 Z" fill="#4f9ad8"/><path d="M114 296 Q128 304 119 317 Q152 322 139 336 Q131 346 131 352" stroke="#f5d000" stroke-width="1.6" fill="none"/><path d="M118 299 Q130 305 122 318" stroke="#f5d000" stroke-width="1.2" fill="none"/><g fill="#f6a500"><rect x="130" y="271" width="5" height="6" transform="rotate(0 132.5 283)"/><rect x="130" y="271" width="5" height="6" transform="rotate(40 132.5 283)"/><rect x="130" y="271" width="5" height="6" transform="rotate(80 132.5 283)"/><rect x="130" y="271" width="5" height="6" transform="rotate(120 132.5 283)"/><rect x="130" y="271" width="5" height="6" transform="rotate(160 132.5 283)"/><rect x="130" y="271" width="5" height="6" transform="rotate(200 132.5 283)"/><rect x="130" y="271" width="5" height="6" transform="rotate(240 132.5 283)"/><rect x="130" y="271" width="5" height="6" transform="rotate(280 132.5 283)"/><rect x="130" y="271" width="5" height="6" transform="rotate(320 132.5 283)"/></g><circle cx="132.5" cy="283" r="8" fill="#f6a500"/><circle cx="132.5" cy="283" r="6" fill="#ffe800"/><circle cx="132.5" cy="283" r="3.2" fill="#1170c0"/><path d="M177 330 V292" stroke="#5f8f60" stroke-width="2.2"/><g fill="#8fc08c" stroke="#f0f8f0" stroke-width="1"><ellipse cx="168" cy="302" rx="8" ry="7"/><ellipse cx="184" cy="299" rx="8" ry="7"/><ellipse cx="176" cy="288" rx="6" ry="6"/><ellipse cx="186" cy="312" rx="6" ry="5"/><ellipse cx="166" cy="314" rx="6" ry="5"/></g><path d="M80 323 Q82 305 90 297 Q97 312 98 330 Q90 336 80 323Z" fill="#e8661c"/><path d="M84 326 Q90 306 96 300 Q100 318 98 332 Q91 335 84 326Z" fill="#f7a21e"/><path d="M78 318 Q86 318 92 330 Q85 332 78 318Z" fill="#5f9a3a"/><ellipse cx="102" cy="312" rx="6" ry="9.5" fill="#f0aa30"/><path d="M96 304 L98 290 L101 300 L103 287 L105 300 L108 292 L107 305 Z" fill="#4a9a30"/><path d="M74 351.5 Q100 310 137 309 Q178 310 202.7 350" stroke="#8b3a14" stroke-width="3.7" fill="none"/><rect x="74" y="339.7" width="130.5" height="3.4" fill="#8b3a14"/><g stroke="#7a3010" stroke-width="0.9"><path d="M98 340 L103 316"/><path d="M103 340 L98 316"/><path d="M110 340 L115 316"/><path d="M115 340 L110 316"/><path d="M122 340 L127 316"/><path d="M127 340 L122 316"/><path d="M134 340 L139 316"/><path d="M139 340 L134 316"/><path d="M146 340 L151 316"/><path d="M151 340 L146 316"/><path d="M158 340 L163 316"/><path d="M163 340 L158 316"/><path d="M170 340 L175 316"/><path d="M175 340 L170 316"/></g><path d="M74 343 L71 352 H79 L82 343 Z M194 343 L197 352 H205 L203 343 Z" fill="#8b3a14"/><text x="70.8" y="375.2" font-family="Liberation Sans" font-size="23.5" fill="#e2261e" lengthAdjust="spacingAndGlyphs" textLength="49">Valle</text><text x="125" y="375.2" font-family="Liberation Sans" font-size="23.5" fill="#e2261e" lengthAdjust="spacingAndGlyphs" textLength="13.5">H</text><text x="138.5" y="375.2" font-family="Liberation Sans" font-size="23.5" fill="#e2261e" lengthAdjust="spacingAndGlyphs" textLength="66">ermoso</text><text x="139.3" y="364" font-family="Liberation Sans" font-size="10.5" font-weight="bold" fill="#2a8a3c" textLength="66" lengthAdjust="spacingAndGlyphs">GAD PARROQUIAL</text></svg>
<div class="t" style="left:605.00px;top:287.60px;font-size:13px;line-height:13px;color:#000;font-weight:bold;letter-spacing:0.000px;transform:scaleX(0.9501);transform-origin:0 0;">REGISTRO&nbsp;DE&nbsp;FACTURAS&nbsp;DE&nbsp;COMPRA&nbsp;Y&nbsp;RETENCIONES&nbsp;A</div>
<div class="t" style="left:677.65px;top:303.70px;font-size:13px;line-height:13px;color:#000;font-weight:bold;letter-spacing:0.000px;transform:scaleX(0.9200);transform-origin:0 0;">PROVEEDORES&nbsp;DE&nbsp;OCTUBRE&nbsp;2022</div>
<div class="t" style="left:1012.40px;top:287.69px;font-size:11px;line-height:11px;color:#000;font-weight:bold;letter-spacing:0.000px;transform:scaleX(0.9395);transform-origin:0 0;">Botellas</div>
<div class="t" style="left:999.70px;top:304.39px;font-size:11px;line-height:11px;color:#000;font-weight:bold;letter-spacing:-0.039px;">plásticas&nbsp;1%</div>
<div class="t" style="left:1084.60px;top:235.99px;font-size:11px;line-height:11px;color:#000;font-weight:bold;letter-spacing:-0.094px;">Actividades</div>
<div class="t" style="left:1108.58px;top:252.99px;font-size:11px;line-height:11px;color:#000;font-weight:bold;letter-spacing:0.000px;">de</div>
<div class="t" style="left:1080.10px;top:269.99px;font-size:11px;line-height:11px;color:#000;font-weight:bold;letter-spacing:0.067px;">construcción</div>
<div class="t" style="left:1095.14px;top:286.99px;font-size:11px;line-height:11px;color:#000;font-weight:bold;letter-spacing:0.000px;">de&nbsp;obra</div>
<div class="t" style="left:1090.85px;top:303.99px;font-size:11px;line-height:11px;color:#000;font-weight:bold;letter-spacing:0.000px;">materias,</div>
<div class="t" style="left:1089.33px;top:320.99px;font-size:11px;line-height:11px;color:#000;font-weight:bold;letter-spacing:0.000px;">inmueble,</div>
<div class="t" style="left:1080.10px;top:337.99px;font-size:11px;line-height:11px;color:#000;font-weight:bold;letter-spacing:0.178px;">urbanización</div>
<div class="t" style="left:1099.41px;top:354.99px;font-size:11px;line-height:11px;color:#000;font-weight:bold;letter-spacing:0.000px;">1,75%</div>
<div class="t" style="left:1159.25px;top:270.89px;font-size:11px;line-height:11px;color:#000;font-weight:bold;letter-spacing:-0.087px;">Cuando</div>
<div class="t" style="left:1161.78px;top:287.89px;font-size:11px;line-height:11px;color:#000;font-weight:bold;letter-spacing:0.000px;">no&nbsp;hay</div>
<div class="t" style="left:1157.30px;top:304.89px;font-size:11px;line-height:11px;color:#000;font-weight:bold;letter-spacing:0.230px;">retenció</div>
<div class="t" style="left:1176.14px;top:321.89px;font-size:11px;line-height:11px;color:#000;font-weight:bold;letter-spacing:0.000px;">n</div>
<div class="t" style="left:1209.60px;top:254.19px;font-size:11px;line-height:11px;color:#000;font-weight:bold;letter-spacing:0.000px;transform:scaleX(0.9365);transform-origin:0 0;">100&nbsp;%&nbsp;y</div>
<div class="t" style="left:1217.19px;top:271.19px;font-size:11px;line-height:11px;color:#000;font-weight:bold;letter-spacing:0.000px;">1%.-</div>
<div class="t" style="left:1208.63px;top:288.19px;font-size:11px;line-height:11px;color:#000;font-weight:bold;letter-spacing:0.000px;">Regime</div>
<div class="t" style="left:1225.14px;top:305.19px;font-size:11px;line-height:11px;color:#000;font-weight:bold;letter-spacing:0.000px;">n</div>
<div class="t" style="left:1210.46px;top:322.19px;font-size:11px;line-height:11px;color:#000;font-weight:bold;letter-spacing:0.000px;">microe</div>
<div class="t" style="left:1208.93px;top:339.19px;font-size:11px;line-height:11px;color:#000;font-weight:bold;letter-spacing:0.000px;">mpresa</div>
<div class="t" style="left:1258.55px;top:264.49px;font-size:11px;line-height:11px;color:#000;font-weight:bold;letter-spacing:0.000px;transform:scaleX(0.8623);transform-origin:0 0;">Productos</div>
<div class="t" style="left:1256.32px;top:281.49px;font-size:11px;line-height:11px;color:#000;font-weight:bold;letter-spacing:0.000px;">agricoilas</div>
<div class="t" style="left:1278.64px;top:298.49px;font-size:11px;line-height:11px;color:#000;font-weight:bold;letter-spacing:0.000px;">o</div>
<div class="t" style="left:1255.71px;top:315.49px;font-size:11px;line-height:11px;color:#000;font-weight:bold;letter-spacing:0.000px;">Pecuarios</div>
<div class="t" style="left:1274.05px;top:332.49px;font-size:11px;line-height:11px;color:#000;font-weight:bold;letter-spacing:0.000px;">1%</div>
<div class="r" style="left:1312px;top:223px;width:27px;height:158px;overflow:hidden;">
<div class="t" style="left:6.30px;top:31.19px;font-size:11px;line-height:11px;color:#000;font-weight:bold;letter-spacing:0.000px;">Transfer</div>
<div class="t" style="left:13.94px;top:48.19px;font-size:11px;line-height:11px;color:#000;font-weight:bold;letter-spacing:0.000px;">encia</div>
<div class="t" style="left:21.58px;top:65.19px;font-size:11px;line-height:11px;color:#000;font-weight:bold;letter-spacing:0.000px;">de</div>
<div class="t" style="left:10.58px;top:82.19px;font-size:11px;line-height:11px;color:#000;font-weight:bold;letter-spacing:0.000px;">bienes</div>
<div class="t" style="left:5.69px;top:99.19px;font-size:11px;line-height:11px;color:#000;font-weight:bold;letter-spacing:0.000px;">muebles</div>
<div class="t" style="left:12.41px;top:116.19px;font-size:11px;line-height:11px;color:#000;font-weight:bold;letter-spacing:0.000px;">1,75%</div>
</div>
<div class="t" style="left:809.15px;top:385.54px;font-size:12px;line-height:12px;color:#000;font-weight:bold;letter-spacing:0.210px;">TOTAL&nbsp;332</div>
<div class="t" style="left:948.20px;top:385.54px;font-size:12px;line-height:12px;color:#000;font-weight:bold;letter-spacing:0.220px;">656.57</div>
<div class="t" style="left:1017.15px;top:385.54px;font-size:12px;line-height:12px;color:#000;font-weight:bold;letter-spacing:0.671px;">343C</div>
<div class="t" style="left:1100.60px;top:385.54px;font-size:12px;line-height:12px;color:#000;font-weight:bold;letter-spacing:0.038px;">343B</div>
<div class="t" style="left:1168.20px;top:385.54px;font-size:12px;line-height:12px;color:#000;font-weight:bold;letter-spacing:1.290px;">332</div>
<div class="t" style="left:1218.65px;top:385.54px;font-size:12px;line-height:12px;color:#000;font-weight:bold;letter-spacing:-0.160px;">343</div>
<div class="t" style="left:1266.50px;top:385.54px;font-size:12px;line-height:12px;color:#000;font-weight:bold;letter-spacing:0.771px;">312A</div>
<div class="r" style="left:1326.7px;top:382.34px;width:12.299999999999955px;height:18px;overflow:hidden;"><div class="t" style="left:0;top:3px;font-size:12px;line-height:12px;color:#000;font-weight:bold;letter-spacing:0.000px;white-space:nowrap;">312B</div></div>
<div class="t" style="left:62.5px;top:431.29px;font-size:11px;line-height:11px;color:#000;font-weight:bold;letter-spacing:0.028px;">FECHA</div>
<div class="t" style="left:157px;top:422.69px;font-size:11px;line-height:11px;color:#000;font-weight:bold;letter-spacing:0.617px;">Nº&nbsp;DE&nbsp;C</div>
<div class="t" style="left:139.7px;top:438.69px;font-size:11px;line-height:11px;color:#000;font-weight:bold;letter-spacing:0.040px;">OMPROBANTE</div>
<div class="t" style="left:273.6px;top:422.69px;font-size:11px;line-height:11px;color:#000;font-weight:bold;letter-spacing:0.630px;">Nº&nbsp;RUC</div>
<div class="r" style="left:259.8px;top:435.69px;width:65.19999999999999px;height:17px;overflow:hidden;"><div class="t" style="left:0;top:3px;font-size:11px;line-height:11px;color:#000;font-weight:bold;letter-spacing:-0.050px;white-space:nowrap;">PROVEEDOR</div></div>
<div class="t" style="left:365px;top:422.69px;font-size:11px;line-height:11px;color:#000;font-weight:bold;letter-spacing:0.110px;">TIPO</div>
<div class="r" style="left:347.8px;top:434.99px;width:49.19999999999999px;height:17px;overflow:hidden;"><div class="t" style="left:0;top:3px;font-size:11px;line-height:11px;color:#000;font-weight:bold;letter-spacing:0.100px;white-space:nowrap;">COMPROBANTE</div></div>
<div class="t" style="left:448.2px;top:430.79px;font-size:11px;line-height:11px;color:#000;font-weight:bold;letter-spacing:0.170px;">AUTORIZACIÓN</div>
<div class="t" style="left:604.7px;top:430.79px;font-size:11px;line-height:11px;color:#000;font-weight:bold;letter-spacing:0.000px;transform:scaleX(0.9674);transform-origin:0 0;">PROVEEDOR</div>
<div class="r" style="left:713.4px;top:427.59px;width:43.60000000000002px;height:17px;overflow:hidden;"><div class="t" style="left:0;top:3px;font-size:11px;line-height:11px;color:#000;font-weight:bold;letter-spacing:0.000px;white-space:nowrap;">BASE&nbsp;12%</div></div>
<div class="r" style="left:785.2px;top:427.59px;width:40.799999999999955px;height:17px;overflow:hidden;"><div class="t" style="left:0;top:3px;font-size:11px;line-height:11px;color:#000;font-weight:bold;letter-spacing:0.000px;white-space:nowrap;">BASE&nbsp;0%</div></div>
<div class="t" style="left:865.4px;top:430.59px;font-size:11px;line-height:11px;color:#000;font-weight:bold;letter-spacing:0.739px;">IVA</div>
<div class="t" style="left:916.5px;top:420.69px;font-size:11px;line-height:11px;color:#000;font-weight:bold;letter-spacing:0.121px;">SUBTO-TAL</div>
<div class="t" style="left:938.9px;top:455.09px;font-size:11px;line-height:11px;color:#000;font-weight:bold;letter-spacing:1.024px;">332</div>
<div class="t" style="left:1015.2px;top:430.69px;font-size:11px;line-height:11px;color:#000;font-weight:bold;letter-spacing:-0.036px;">TOTAL</div>
<div class="t" style="left:1109.5px;top:422.69px;font-size:11px;line-height:11px;color:#000;font-weight:bold;letter-spacing:0.158px;">N°</div>
<div class="r" style="left:1082px;top:434.89px;width:55px;height:17px;overflow:hidden;"><div class="t" style="left:0;top:3px;font-size:11px;line-height:11px;color:#000;font-weight:bold;letter-spacing:0.452px;white-space:nowrap;">RETENCION</div></div>
<div class="t" style="left:1188.4px;top:420.69px;font-size:11px;line-height:11px;color:#000;font-weight:bold;letter-spacing:0.245px;">RETENCION&nbsp;IVA</div>
<div class="t" style="left:1180.00px;top:455.19px;font-size:11px;line-height:11px;color:#000;font-weight:bold;letter-spacing:-0.008px;">30%</div>
<div class="t" style="left:1227.00px;top:455.19px;font-size:11px;line-height:11px;color:#000;font-weight:bold;letter-spacing:-0.008px;">70%</div>
<div class="t" style="left:1280.00px;top:455.19px;font-size:11px;line-height:11px;color:#000;font-weight:bold;letter-spacing:0.289px;">100%</div>
<div class="r" style="left:1321.5px;top:417.69px;width:17.5px;height:17px;overflow:hidden;"><div class="t" style="left:0;top:3px;font-size:11px;line-height:11px;color:#000;font-weight:bold;letter-spacing:0.452px;white-space:nowrap;">RETENCION</div></div>
<div class="r" style="left:1337px;top:452.19px;width:2px;height:17px;overflow:hidden;"><div class="t" style="left:0;top:3px;font-size:11px;line-height:11px;color:#000;font-weight:bold;letter-spacing:0.000px;white-space:nowrap;">(</div></div>
<div class="fb" style="left:30px;top:432px;"></div>
<div class="fb" style="left:97px;top:432px;"></div>
<div class="fb" style="left:228px;top:432px;"></div>
<div class="fb" style="left:324px;top:432px;"></div>
<div class="fb" style="left:397px;top:432px;"></div>
<div class="fb" style="left:553px;top:432px;"></div>
<div class="fb" style="left:690px;top:432px;"></div>
<div class="fb" style="left:757px;top:432px;"></div>
<div class="fb" style="left:826px;top:432px;"></div>
<div class="fb" style="left:890px;top:432px;"></div>
<div class="fb" style="left:972px;top:432px;"></div>
<div class="fb" style="left:1058px;top:432px;"></div>
<div class="fb" style="left:1137px;top:432px;"></div>
<div class="fb" style="left:1294px;top:432px;"></div>
<div class="t" style="left:39.70px;top:499.77px;font-size:11.5px;line-height:11.5px;color:#000;font-weight:normal;letter-spacing:0.000px;transform:scaleX(0.8287);transform-origin:0 0;">1</div>
<div class="t" style="left:53.5px;top:499.77px;font-size:11.5px;line-height:11.5px;color:#000;font-weight:normal;letter-spacing:0.855px;">3/10/2022</div>
<div class="t" style="left:117.6px;top:499.77px;font-size:11.5px;line-height:11.5px;color:#000;font-weight:normal;letter-spacing:0.007px;">001</div>
<div class="t" style="left:146.7px;top:499.77px;font-size:11.5px;line-height:11.5px;color:#000;font-weight:normal;letter-spacing:0.307px;">777</div>
<div class="t" style="left:175.6px;top:499.77px;font-size:11.5px;line-height:11.5px;color:#000;font-weight:normal;letter-spacing:0.530px;">200864902</div>
<div class="t" style="left:248.6px;top:499.77px;font-size:11.5px;line-height:11.5px;color:#000;font-weight:normal;letter-spacing:0.497px;">1768152560001</div>
<div class="t" style="left:344.6px;top:499.77px;font-size:11.5px;line-height:11.5px;color:#000;font-weight:normal;letter-spacing:0.000px;transform:scaleX(0.8488);transform-origin:0 0;">FACT.&nbsp;ELEC.</div>
<div class="t" style="left:417.5px;top:483.77px;font-size:11.5px;line-height:11.5px;color:#000;font-weight:normal;letter-spacing:0.603px;">031020220117681525600</div>
<div class="t" style="left:417.5px;top:500.77px;font-size:11.5px;line-height:11.5px;color:#000;font-weight:normal;letter-spacing:0.560px;">012001777200864902031</div>
<div class="t" style="left:417.5px;top:517.77px;font-size:11.5px;line-height:11.5px;color:#000;font-weight:normal;letter-spacing:0.622px;">0202219</div>
<div class="t" style="left:573.8px;top:475.87px;font-size:11.5px;line-height:11.5px;color:#000;font-weight:normal;letter-spacing:0.000px;transform:scaleX(0.9011);transform-origin:0 0;">CORPORACION</div>
<div class="t" style="left:573.8px;top:492.87px;font-size:11.5px;line-height:11.5px;color:#000;font-weight:normal;letter-spacing:0.000px;transform:scaleX(0.8938);transform-origin:0 0;">NACIONAL&nbsp;DE</div>
<div class="t" style="left:573.8px;top:509.87px;font-size:11.5px;line-height:11.5px;color:#000;font-weight:normal;letter-spacing:0.000px;transform:scaleX(0.8940);transform-origin:0 0;">TELECOMUNICACIONES</div>
<div class="t" style="left:573.8px;top:526.87px;font-size:11.5px;line-height:11.5px;color:#000;font-weight:normal;letter-spacing:0.000px;transform:scaleX(0.8508);transform-origin:0 0;">CNT&nbsp;EP</div>
<div class="t" style="left:730.65px;top:499.77px;font-size:11.5px;line-height:11.5px;color:#000;font-weight:normal;letter-spacing:0.106px;">6.28</div>
<div class="t" style="left:863.70px;top:499.77px;font-size:11.5px;line-height:11.5px;color:#000;font-weight:normal;letter-spacing:0.406px;">0.75</div>
<div class="t" style="left:936.80px;top:499.77px;font-size:11.5px;line-height:11.5px;color:#000;font-weight:normal;letter-spacing:0.340px;">6.28</div>
<div class="t" style="left:1020.80px;top:499.77px;font-size:11.5px;line-height:11.5px;color:#000;font-weight:normal;letter-spacing:0.340px;">7.03</div>
<div class="t" style="left:1094.10px;top:499.77px;font-size:11.5px;line-height:11.5px;color:#000;font-weight:normal;letter-spacing:0.000px;transform:scaleX(0.8608);transform-origin:0 0;">SIN.&nbsp;RET</div>
<div class="t" style="left:1270.30px;top:499.77px;font-size:11.5px;line-height:11.5px;color:#000;font-weight:normal;letter-spacing:0.340px;">0.00</div>
<div class="r" style="left:1327.5px;top:496.77px;width:11.5px;height:17.5px;overflow:hidden;"><div class="t" style="left:0;top:3px;font-size:11.5px;line-height:11.5px;color:#000;font-weight:normal;letter-spacing:0.000px;white-space:nowrap;">33</div></div>
<div class="t" style="left:39.70px;top:567.77px;font-size:11.5px;line-height:11.5px;color:#000;font-weight:normal;letter-spacing:0.000px;transform:scaleX(0.8287);transform-origin:0 0;">2</div>
<div class="t" style="left:53.5px;top:567.77px;font-size:11.5px;line-height:11.5px;color:#000;font-weight:normal;letter-spacing:0.855px;">3/10/2022</div>
<div class="t" style="left:117.6px;top:567.77px;font-size:11.5px;line-height:11.5px;color:#000;font-weight:normal;letter-spacing:0.007px;">001</div>
<div class="t" style="left:146.7px;top:567.77px;font-size:11.5px;line-height:11.5px;color:#000;font-weight:normal;letter-spacing:0.307px;">777</div>
<div class="t" style="left:175.6px;top:567.77px;font-size:11.5px;line-height:11.5px;color:#000;font-weight:normal;letter-spacing:0.530px;">200864903</div>
<div class="t" style="left:248.6px;top:567.77px;font-size:11.5px;line-height:11.5px;color:#000;font-weight:normal;letter-spacing:0.497px;">1768152560001</div>
<div class="t" style="left:344.6px;top:567.77px;font-size:11.5px;line-height:11.5px;color:#000;font-weight:normal;letter-spacing:0.000px;transform:scaleX(0.8488);transform-origin:0 0;">FACT.&nbsp;ELEC.</div>
<div class="t" style="left:417.5px;top:551.77px;font-size:11.5px;line-height:11.5px;color:#000;font-weight:normal;letter-spacing:0.603px;">031020220117681525600</div>
<div class="t" style="left:417.5px;top:568.77px;font-size:11.5px;line-height:11.5px;color:#000;font-weight:normal;letter-spacing:0.560px;">012001777200864903031</div>
<div class="t" style="left:417.5px;top:585.77px;font-size:11.5px;line-height:11.5px;color:#000;font-weight:normal;letter-spacing:0.622px;">0202214</div>
<div class="t" style="left:573.8px;top:543.87px;font-size:11.5px;line-height:11.5px;color:#000;font-weight:normal;letter-spacing:0.000px;transform:scaleX(0.9011);transform-origin:0 0;">CORPORACION</div>
<div class="t" style="left:573.8px;top:560.87px;font-size:11.5px;line-height:11.5px;color:#000;font-weight:normal;letter-spacing:0.000px;transform:scaleX(0.8938);transform-origin:0 0;">NACIONAL&nbsp;DE</div>
<div class="t" style="left:573.8px;top:577.87px;font-size:11.5px;line-height:11.5px;color:#000;font-weight:normal;letter-spacing:0.000px;transform:scaleX(0.8940);transform-origin:0 0;">TELECOMUNICACIONES</div>
<div class="t" style="left:573.8px;top:594.87px;font-size:11.5px;line-height:11.5px;color:#000;font-weight:normal;letter-spacing:0.000px;transform:scaleX(0.8508);transform-origin:0 0;">CNT&nbsp;EP</div>
<div class="t" style="left:730.65px;top:567.77px;font-size:11.5px;line-height:11.5px;color:#000;font-weight:normal;letter-spacing:0.106px;">6.20</div>
<div class="t" style="left:863.70px;top:567.77px;font-size:11.5px;line-height:11.5px;color:#000;font-weight:normal;letter-spacing:0.406px;">0.74</div>
<div class="t" style="left:936.80px;top:567.77px;font-size:11.5px;line-height:11.5px;color:#000;font-weight:normal;letter-spacing:0.340px;">6.20</div>
<div class="t" style="left:1020.80px;top:567.77px;font-size:11.5px;line-height:11.5px;color:#000;font-weight:normal;letter-spacing:0.340px;">6.94</div>
<div class="t" style="left:1094.10px;top:567.77px;font-size:11.5px;line-height:11.5px;color:#000;font-weight:normal;letter-spacing:0.000px;transform:scaleX(0.8608);transform-origin:0 0;">SIN.&nbsp;RET</div>
<div class="t" style="left:1270.30px;top:567.77px;font-size:11.5px;line-height:11.5px;color:#000;font-weight:normal;letter-spacing:0.340px;">0.00</div>
<div class="r" style="left:1327.5px;top:564.77px;width:11.5px;height:17.5px;overflow:hidden;"><div class="t" style="left:0;top:3px;font-size:11.5px;line-height:11.5px;color:#000;font-weight:normal;letter-spacing:0.000px;white-space:nowrap;">33</div></div>
<div class="t" style="left:39.70px;top:627.77px;font-size:11.5px;line-height:11.5px;color:#000;font-weight:normal;letter-spacing:0.000px;transform:scaleX(0.8287);transform-origin:0 0;">3</div>
<div class="t" style="left:53.5px;top:627.77px;font-size:11.5px;line-height:11.5px;color:#000;font-weight:normal;letter-spacing:0.855px;">3/10/2022</div>
<div class="t" style="left:117.6px;top:627.77px;font-size:11.5px;line-height:11.5px;color:#000;font-weight:normal;letter-spacing:0.007px;">002</div>
<div class="t" style="left:146.7px;top:627.77px;font-size:11.5px;line-height:11.5px;color:#000;font-weight:normal;letter-spacing:0.307px;">003</div>
<div class="t" style="left:175.6px;top:627.77px;font-size:11.5px;line-height:11.5px;color:#000;font-weight:normal;letter-spacing:0.637px;">000142511</div>
<div class="t" style="left:248.6px;top:627.77px;font-size:11.5px;line-height:11.5px;color:#000;font-weight:normal;letter-spacing:0.497px;">1712182136001</div>
<div class="t" style="left:344.6px;top:627.77px;font-size:11.5px;line-height:11.5px;color:#000;font-weight:normal;letter-spacing:0.000px;transform:scaleX(0.8488);transform-origin:0 0;">FACT.&nbsp;ELEC.</div>
<div class="t" style="left:417.5px;top:611.77px;font-size:11.5px;line-height:11.5px;color:#000;font-weight:normal;letter-spacing:0.603px;">031020220117121821360</div>
<div class="t" style="left:417.5px;top:628.77px;font-size:11.5px;line-height:11.5px;color:#000;font-weight:normal;letter-spacing:0.603px;">012002003000142511526</div>
<div class="t" style="left:417.5px;top:645.77px;font-size:11.5px;line-height:11.5px;color:#000;font-weight:normal;letter-spacing:0.622px;">6526514</div>
<div class="t" style="left:573.8px;top:618.77px;font-size:11.5px;line-height:11.5px;color:#000;font-weight:normal;letter-spacing:0.000px;transform:scaleX(0.9120);transform-origin:0 0;">MARIA&nbsp;ALEXANDRA</div>
<div class="t" style="left:573.8px;top:635.77px;font-size:11.5px;line-height:11.5px;color:#000;font-weight:normal;letter-spacing:0.000px;transform:scaleX(0.8566);transform-origin:0 0;">VILLARREAL&nbsp;CEDENO</div>
<div class="t" style="left:723.35px;top:627.77px;font-size:11.5px;line-height:11.5px;color:#000;font-weight:normal;letter-spacing:0.426px;">144.24</div>
<div class="t" style="left:860.65px;top:627.77px;font-size:11.5px;line-height:11.5px;color:#000;font-weight:normal;letter-spacing:0.231px;">17.31</div>
<div class="t" style="left:929.80px;top:627.77px;font-size:11.5px;line-height:11.5px;color:#000;font-weight:normal;letter-spacing:0.446px;">144.24</div>
<div class="t" style="left:1013.65px;top:627.77px;font-size:11.5px;line-height:11.5px;color:#000;font-weight:normal;letter-spacing:0.506px;">161.55</div>
<div class="t" style="left:1083.55px;top:627.77px;font-size:11.5px;line-height:11.5px;color:#000;font-weight:normal;letter-spacing:0.774px;">000001144</div>
<div class="t" style="left:1266.00px;top:627.77px;font-size:11.5px;line-height:11.5px;color:#000;font-weight:normal;letter-spacing:0.806px;">17.31</div>
<div class="r" style="left:1327.5px;top:624.77px;width:11.5px;height:17.5px;overflow:hidden;"><div class="t" style="left:0;top:3px;font-size:11.5px;line-height:11.5px;color:#000;font-weight:normal;letter-spacing:0.000px;white-space:nowrap;">33</div></div>
<div class="r" style="left:415px;top:658px;width:292px;height:20px;overflow:hidden;">
<div class="t" style="left:2.5px;top:5.27px;font-size:11.5px;line-height:11.5px;color:#000;font-weight:normal;letter-spacing:0.603px;">041020220117600026000</div>
<div class="t" style="left:158.79999999999995px;top:12.27px;font-size:11.5px;line-height:11.5px;color:#000;font-weight:normal;letter-spacing:0.000px;transform:scaleX(0.8682);transform-origin:0 0;">BANCO&nbsp;CENTRAL&nbsp;DEL</div>
</div>
<svg class="s" style="left:115px;top:471px" width="7" height="7" viewBox="0 0 7 7"><path d="M0 0 H6 L0 6Z" fill="#0e7a0d"/></svg>
<svg class="s" style="left:144px;top:471px" width="7" height="7" viewBox="0 0 7 7"><path d="M0 0 H6 L0 6Z" fill="#0e7a0d"/></svg>
<svg class="s" style="left:173px;top:471px" width="7" height="7" viewBox="0 0 7 7"><path d="M0 0 H6 L0 6Z" fill="#0e7a0d"/></svg>
<svg class="s" style="left:246px;top:471px" width="7" height="7" viewBox="0 0 7 7"><path d="M0 0 H6 L0 6Z" fill="#0e7a0d"/></svg>
<svg class="s" style="left:415px;top:471px" width="7" height="7" viewBox="0 0 7 7"><path d="M0 0 H6 L0 6Z" fill="#0e7a0d"/></svg>
<svg class="s" style="left:115px;top:539px" width="7" height="7" viewBox="0 0 7 7"><path d="M0 0 H6 L0 6Z" fill="#0e7a0d"/></svg>
<svg class="s" style="left:144px;top:539px" width="7" height="7" viewBox="0 0 7 7"><path d="M0 0 H6 L0 6Z" fill="#0e7a0d"/></svg>
<svg class="s" style="left:173px;top:539px" width="7" height="7" viewBox="0 0 7 7"><path d="M0 0 H6 L0 6Z" fill="#0e7a0d"/></svg>
<svg class="s" style="left:246px;top:539px" width="7" height="7" viewBox="0 0 7 7"><path d="M0 0 H6 L0 6Z" fill="#0e7a0d"/></svg>
<svg class="s" style="left:415px;top:539px" width="7" height="7" viewBox="0 0 7 7"><path d="M0 0 H6 L0 6Z" fill="#0e7a0d"/></svg>
<svg class="s" style="left:115px;top:607px" width="7" height="7" viewBox="0 0 7 7"><path d="M0 0 H6 L0 6Z" fill="#0e7a0d"/></svg>
<svg class="s" style="left:144px;top:607px" width="7" height="7" viewBox="0 0 7 7"><path d="M0 0 H6 L0 6Z" fill="#0e7a0d"/></svg>
<svg class="s" style="left:173px;top:607px" width="7" height="7" viewBox="0 0 7 7"><path d="M0 0 H6 L0 6Z" fill="#0e7a0d"/></svg>
<svg class="s" style="left:246px;top:607px" width="7" height="7" viewBox="0 0 7 7"><path d="M0 0 H6 L0 6Z" fill="#0e7a0d"/></svg>
<svg class="s" style="left:415px;top:607px" width="7" height="7" viewBox="0 0 7 7"><path d="M0 0 H6 L0 6Z" fill="#0e7a0d"/></svg>
<svg class="s" style="left:115px;top:658px" width="7" height="7" viewBox="0 0 7 7"><path d="M0 0 H6 L0 6Z" fill="#0e7a0d"/></svg>
<svg class="s" style="left:144px;top:658px" width="7" height="7" viewBox="0 0 7 7"><path d="M0 0 H6 L0 6Z" fill="#0e7a0d"/></svg>
<svg class="s" style="left:173px;top:658px" width="7" height="7" viewBox="0 0 7 7"><path d="M0 0 H6 L0 6Z" fill="#0e7a0d"/></svg>
<svg class="s" style="left:246px;top:658px" width="7" height="7" viewBox="0 0 7 7"><path d="M0 0 H6 L0 6Z" fill="#0e7a0d"/></svg>
<svg class="s" style="left:415px;top:658px" width="7" height="7" viewBox="0 0 7 7"><path d="M0 0 H6 L0 6Z" fill="#0e7a0d"/></svg>
<svg class="s" style="left:1076px;top:607px" width="7" height="7" viewBox="0 0 7 7"><path d="M0 0 H6 L0 6Z" fill="#0e7a0d"/></svg>
<svg class="s" style="left:844px;top:658px" width="7" height="7" viewBox="0 0 7 7"><path d="M0 0 H6 L0 6Z" fill="#0e7a0d"/></svg>
<div class="r" style="left:569px;top:605px;width:136px;height:50px;border:2px solid #217346;"></div>
<div class="r" style="left:704px;top:655px;width:5px;height:5px;background:#217346;border:1px solid #fff;"></div>
<div class="r" style="left:1339px;top:203px;width:21px;height:475px;background:#e6e6e6;"></div>
<div class="r" style="left:1342px;top:205px;width:13px;height:13px;background:#fff;border:1px solid #a6a6a6;"></div>
<svg class="s" style="left:1344px;top:208px;" width="10" height="8" viewBox="0 0 10 8"><path d="M1 6 L5 2 L9 6Z" fill="#777"/></svg>
<div class="r" style="left:1342px;top:219px;width:13px;height:78px;background:#fff;border:1px solid #a6a6a6;"></div>
<div class="r" style="left:1342px;top:299px;width:15px;height:366px;background:#dcdcdc;"></div>
<div class="r" style="left:1342px;top:664px;width:13px;height:13px;background:#fff;border:1px solid #a6a6a6;"></div>
<svg class="s" style="left:1344px;top:667px;" width="10" height="8" viewBox="0 0 10 8"><path d="M1 2 L5 6 L9 2Z" fill="#777"/></svg>
<div class="r" style="left:0px;top:678px;width:1360px;height:28px;background:#e6e6e6;"></div>
<div class="r" style="left:0px;top:678px;width:1360px;height:1px;background:#c6c6c6;"></div>
<svg class="s" style="left:24px;top:685px;" width="12" height="14" viewBox="0 0 12 14"><path d="M8 2 L3 7 L8 12Z" fill="#217346"/></svg>
<svg class="s" style="left:52px;top:685px;" width="12" height="14" viewBox="0 0 12 14"><path d="M4 2 L9 7 L4 12Z" fill="#b8b8b8"/></svg>
<div class="t" style="left:79px;top:686.00px;font-size:13px;line-height:13px;color:#217346;font-weight:normal;"><b>...</b></div>
<div class="r" style="left:100px;top:682px;width:1px;height:20px;background:#bdbdbd;"></div>
<div class="r" style="left:195px;top:682px;width:1px;height:20px;background:#bdbdbd;"></div>
<div class="r" style="left:287px;top:682px;width:1px;height:20px;background:#bdbdbd;"></div>
<div class="r" style="left:395px;top:682px;width:1px;height:20px;background:#bdbdbd;"></div>
<div class="t" style="left:114px;top:686.84px;font-size:12px;line-height:12px;color:#444;font-weight:normal;">JUNIO 2022</div>
<div class="t" style="left:209px;top:686.84px;font-size:12px;line-height:12px;color:#444;font-weight:normal;">JULIO 2022</div>
<div class="t" style="left:300px;top:686.84px;font-size:12px;line-height:12px;color:#444;font-weight:normal;">AGOSTO 2022</div>
<div class="t" style="left:410px;top:686.84px;font-size:12px;line-height:12px;color:#444;font-weight:normal;">SEPTIEMBRE 2022</div>
<div class="r" style="left:528px;top:678px;width:114px;height:24px;background:#fff;"></div>
<div class="r" style="left:528px;top:678px;width:1px;height:24px;background:#bdbdbd;"></div>
<div class="r" style="left:641px;top:678px;width:1px;height:24px;background:#bdbdbd;"></div>
<div class="r" style="left:528px;top:700px;width:114px;height:2px;background:#217346;"></div>
<div class="t" style="left:540.50px;top:686.84px;font-size:12px;line-height:12px;color:#217346;font-weight:bold;letter-spacing:-0.033px;">OCTUBRE&nbsp;2022</div>
<svg class="s" style="left:674px;top:683px;" width="18" height="18" viewBox="0 0 18 18"><circle cx="8.5" cy="8.5" r="7" fill="none" stroke="#7a7a7a" stroke-width="1.2"/><path d="M8.5 4.5 V12.5 M4.5 8.5 H12.5" stroke="#7a7a7a" stroke-width="1.4"/></svg>
<svg class="s" style="left:815px;top:686px;" width="4" height="14" viewBox="0 0 4 14"><circle cx="1.5" cy="2" r="1" fill="#aaa"/><circle cx="1.5" cy="6.5" r="1" fill="#aaa"/><circle cx="1.5" cy="11" r="1" fill="#aaa"/></svg>
<div class="r" style="left:833px;top:685px;width:502px;height:15px;background:#dcdcdc;"></div>
<div class="r" style="left:833px;top:685px;width:13px;height:13px;background:#fff;border:1px solid #8a8a8a;"></div>
<svg class="s" style="left:836px;top:687px;" width="10" height="10" viewBox="0 0 10 10"><path d="M7 1 L3 5 L7 9Z" fill="#555"/></svg>
<div class="r" style="left:847px;top:685px;width:319px;height:13px;background:#fff;border:1px solid #8a8a8a;"></div>
<div class="r" style="left:1320px;top:685px;width:13px;height:13px;background:#fff;border:1px solid #8a8a8a;"></div>
<svg class="s" style="left:1323px;top:687px;" width="10" height="10" viewBox="0 0 10 10"><path d="M3 1 L7 5 L3 9Z" fill="#555"/></svg>
<div class="r" style="left:0px;top:706px;width:1360px;height:22px;background:#f3f3f3;"></div>
<div class="r" style="left:0px;top:706px;width:1360px;height:1px;background:#d6d6d6;"></div>
<div class="t" style="left:6px;top:710.84px;font-size:12px;line-height:12px;color:#333;font-weight:normal;">Listo</div>
<svg class="s" style="left:48px;top:708px;" width="18" height="18" viewBox="0 0 18 18"><g fill="none" stroke="#555" stroke-width="1.2"><path d="M9 3 A6 6 0 1 0 14 12"/><path d="M8 1 V5"/></g><path d="M9 9 L16 16 M16 9 L9 16" stroke="#444" stroke-width="1.8"/></svg>
<div class="t" style="left:69px;top:710.84px;font-size:12px;line-height:12px;color:#333;font-weight:normal;">Accesibilidad: es necesario investigar</div>
<div class="r" style="left:1060px;top:707px;width:40px;height:21px;background:#c6c6c6;"></div>
<svg class="s" style="left:1069px;top:709px;" width="22" height="16" viewBox="0 0 22 16"><g fill="none" stroke="#555" stroke-width="1"><rect x="2.5" y="2.5" width="14" height="12"/><path d="M2.5 6.5 H16.5 M2.5 10.5 H16.5 M7.5 2.5 V14.5 M11.5 2.5 V14.5"/></g></svg>
<svg class="s" style="left:1110px;top:709px;" width="22" height="16" viewBox="0 0 22 16"><g fill="none" stroke="#555" stroke-width="1"><rect x="3.5" y="2.5" width="14" height="12"/><rect x="6.5" y="5.5" width="8" height="6"/><path d="M8 7.5 H13 M8 9.5 H13"/></g></svg>
<svg class="s" style="left:1150px;top:709px;" width="22" height="16" viewBox="0 0 22 16"><g fill="none" stroke="#555" stroke-width="1"><rect x="3.5" y="2.5" width="14" height="12"/><path d="M10.5 2.5 V9.5 H17.5 M3.5 9.5 H6"/></g></svg>
<div class="r" style="left:1186px;top:716px;width:9px;height:1px;background:#555;"></div>
<div class="r" style="left:1199px;top:716px;width:99px;height:1px;background:#888;"></div>
<div class="r" style="left:1246px;top:711px;width:5px;height:11px;background:#555;"></div>
<div class="r" style="left:1302px;top:716px;width:9px;height:1px;background:#555;"></div>
<div class="r" style="left:1306px;top:712px;width:1px;height:9px;background:#555;"></div>
<div class="t" style="left:1325px;top:710.84px;font-size:12px;line-height:12px;color:#333;font-weight:normal;">100%</div>
<div class="r" style="left:0px;top:728px;width:1360px;height:40px;background:#101010;"></div>
<div class="r" style="left:295px;top:728px;width:48px;height:40px;background:#2e2e2e;"></div>
<div class="r" style="left:250px;top:766px;width:40px;height:2px;background:#76b9ed;"></div>
<div class="r" style="left:295px;top:766px;width:48px;height:2px;background:#76b9ed;"></div>
<div class="r" style="left:348px;top:766px;width:40px;height:2px;background:#76b9ed;"></div>
<div class="r" style="left:397px;top:766px;width:40px;height:2px;background:#76b9ed;"></div>
<div class="r" style="left:446px;top:766px;width:40px;height:2px;background:#76b9ed;"></div>
<div class="r" style="left:494px;top:766px;width:40px;height:2px;background:#76b9ed;"></div>
<div class="r" style="left:543px;top:766px;width:40px;height:2px;background:#76b9ed;"></div>
<svg class="s" style="left:0px;top:728px;" width="600" height="40" viewBox="0 0 600 40">
<g fill="#fff"><path d="M16 12.5 L23 11.5 V19 H16Z"/><path d="M24 11.3 L32 10 V19 H24Z"/><path d="M16 20 H23 V27.5 L16 26.5Z"/><path d="M24 20 H32 V29 L24 27.7Z"/></g>
<g fill="none" stroke="#fff" stroke-width="1.5"><circle cx="74" cy="17.5" r="5.8"/><path d="M69.8 21.7 L64 27.5"/></g>
<circle cx="123" cy="20" r="12" fill="#1f8fdc"/>
<path d="M111 20 A12 12 0 0 1 135 18 Q135 25 126 25 Q118 25 119 20 Q121 15 128 16 Q120 9 111 20Z" fill="#4cc86a"/>
<path d="M116 22 Q115 30 124 31 Q130 31 133 27 Q124 30 120 25 Z" fill="#0f5ba8"/>
<circle cx="172" cy="20" r="12" fill="#db4437"/>
<path d="M172 20 L182.4 26 A12 12 0 0 1 166 30.4 Z" fill="#0f9d58"/>
<path d="M172 20 L166 30.4 A12 12 0 0 1 160 20 L161.6 14 Z" fill="#0f9d58"/>
<path d="M172 20 L182.4 26 A12 12 0 0 0 182.4 14 L172 14Z" fill="#ffcd40"/>
<circle cx="172" cy="20" r="5.5" fill="#fff"/><circle cx="172" cy="20" r="4.3" fill="#4285f4"/>
<rect x="214" y="9.5" width="19" height="21" rx="1.5" fill="#2b7cd3"/><rect x="214" y="16" width="19" height="7" fill="#185abd"/><rect x="214" y="23" width="19" height="7.5" fill="#103f91"/>
<rect x="209" y="14" width="12" height="12" rx="1" fill="#185abd"/>
<text x="210.5" y="24" font-family="Liberation Sans" font-size="10" font-weight="bold" fill="#fff">W</text>
<path d="M259 12 H267 L269 14 H280.5 V29 H259Z" fill="#e8b020"/><rect x="259" y="16" width="21.5" height="13" fill="#ffd864"/>
<rect x="265" y="23" width="10" height="6" fill="#0f6cbd"/><rect x="268" y="27" width="4" height="3" fill="#0f6cbd"/>
<rect x="313" y="9.5" width="18" height="21" rx="1.5" fill="#21a366"/><rect x="313" y="16" width="18" height="7" fill="#107c41"/><rect x="313" y="23" width="18" height="7.5" fill="#185c37"/>
<rect x="307" y="14" width="12" height="12" rx="1" fill="#107c41"/>
<text x="309.5" y="24" font-family="Liberation Sans" font-size="10" font-weight="bold" fill="#fff">X</text>
<circle cx="368" cy="20" r="11" fill="#ff7a1a"/><path d="M358 14 Q362 5 372 9 Q380 7 378 16 Q382 25 372 31 Q360 30 358 22Z" fill="#ff4f3a"/>
<circle cx="368" cy="20" r="6" fill="#7542e5"/><path d="M372 8 Q378 10 379 20 Q376 12 370 12Z" fill="#ffbd4f"/>
<circle cx="417" cy="19" r="12" fill="#db4437"/>
<path d="M417 19 L427.4 25 A12 12 0 0 1 411 29.4 Z" fill="#0f9d58"/><path d="M417 19 L411 29.4 A12 12 0 0 1 405 19 L406.6 13 Z" fill="#0f9d58"/>
<path d="M417 19 L427.4 25 A12 12 0 0 0 427.4 13 L417 13Z" fill="#ffcd40"/>
<circle cx="417" cy="19" r="5.5" fill="#fff"/><circle cx="417" cy="19" r="4.3" fill="#4285f4"/>
<circle cx="425" cy="27" r="7.5" fill="#bbb" stroke="#333" stroke-width="1"/><path d="M420 25 Q425 20 430 25 Q430 31 425 33 Q420 31 420 25Z" fill="#555"/>
<rect x="457" y="9" width="18" height="23" fill="#fff"/><rect x="459.5" y="11.5" width="13" height="4" fill="#111"/>
<g fill="#111"><rect x="459.5" y="18.0" width="3" height="3"/><rect x="459.5" y="22.5" width="3" height="3"/><rect x="459.5" y="27.0" width="3" height="3"/><rect x="464.1" y="18.0" width="3" height="3"/><rect x="464.1" y="22.5" width="3" height="3"/><rect x="464.1" y="27.0" width="3" height="3"/><rect x="468.7" y="18.0" width="3" height="3"/><rect x="468.7" y="22.5" width="3" height="3"/><rect x="468.7" y="27.0" width="3" height="3"/></g>
<path d="M503 20 Q503 11 515 10 Q526 10 526 17 Q526 21 520 21 Q516 22 518 26 Q518 31 511 31 Q503 30 503 20Z" fill="#b8d8ee"/>
<circle cx="508" cy="18" r="1.8" fill="#e53935"/><circle cx="513" cy="14" r="1.8" fill="#43a047"/><circle cx="519" cy="15" r="1.8" fill="#fbc02d"/><circle cx="509" cy="24" r="1.8" fill="#1e88e5"/>
<path d="M514 31 L525 15 L527 16 L517 32Z" fill="#f0a030"/><path d="M524 14 L527 9 L529 10 L527 16Z" fill="#e0c080"/>
<rect x="553.5" y="9.5" width="21" height="21" rx="3" fill="#b30b00"/>
<path d="M558 26 Q562 20 564 12 Q565 9 566 12 Q567 18 571 22 Q574 23 573 24 Q566 23 558 26Z" fill="none" stroke="#fff" stroke-width="1.6"/>
</svg>
<svg class="s" style="left:1110px;top:728px;" width="250" height="40" viewBox="0 0 250 40">
<path d="M8 22.5 L13.5 17 L19 22.5" fill="none" stroke="#fff" stroke-width="1.3"/>
<g fill="none" stroke="#ddd" stroke-width="1.2"><rect x="31.5" y="16.5" width="9" height="9" rx="1"/><path d="M40.5 19.5 L44 17.5 V24.5 L40.5 22.5"/><path d="M30 14 Q35.5 10 41 14 M30 28 Q35.5 32 41 28"/></g>
<g fill="none" stroke="#ddd" stroke-width="1.2"><rect x="55.5" y="16.5" width="14" height="9"/><path d="M62.5 25.5 V29 M58 29 H67"/><path d="M53 13.5 H57 V20"/></g>
<g fill="none" stroke="#ddd" stroke-width="1.2"><path d="M78 18 H81 L85 14.5 V27.5 L81 24 H78Z"/><path d="M87 18 Q89 21 87 24 M89.5 16 Q93 21 89.5 26 M92 14 Q96.5 21 92 28"/></g>
<g fill="none" stroke="#fff" stroke-width="1.3"><path d="M209.5 12.5 H225.5 V24.5 H216 L212 28 V24.5 H209.5Z"/></g>
</svg>
<div class="t" style="left:1215px;top:741.34px;font-size:12px;line-height:12px;color:#fff;font-weight:normal;letter-spacing:0.000px;transform:scaleX(0.8328);transform-origin:0 0;">ESP</div>
<div class="t" style="left:1261px;top:732.34px;font-size:12px;line-height:12px;color:#fff;font-weight:normal;">16:20</div>
<div class="t" style="left:1249px;top:750.84px;font-size:12px;line-height:12px;color:#fff;font-weight:normal;">1/11/2022</div></body></html>
